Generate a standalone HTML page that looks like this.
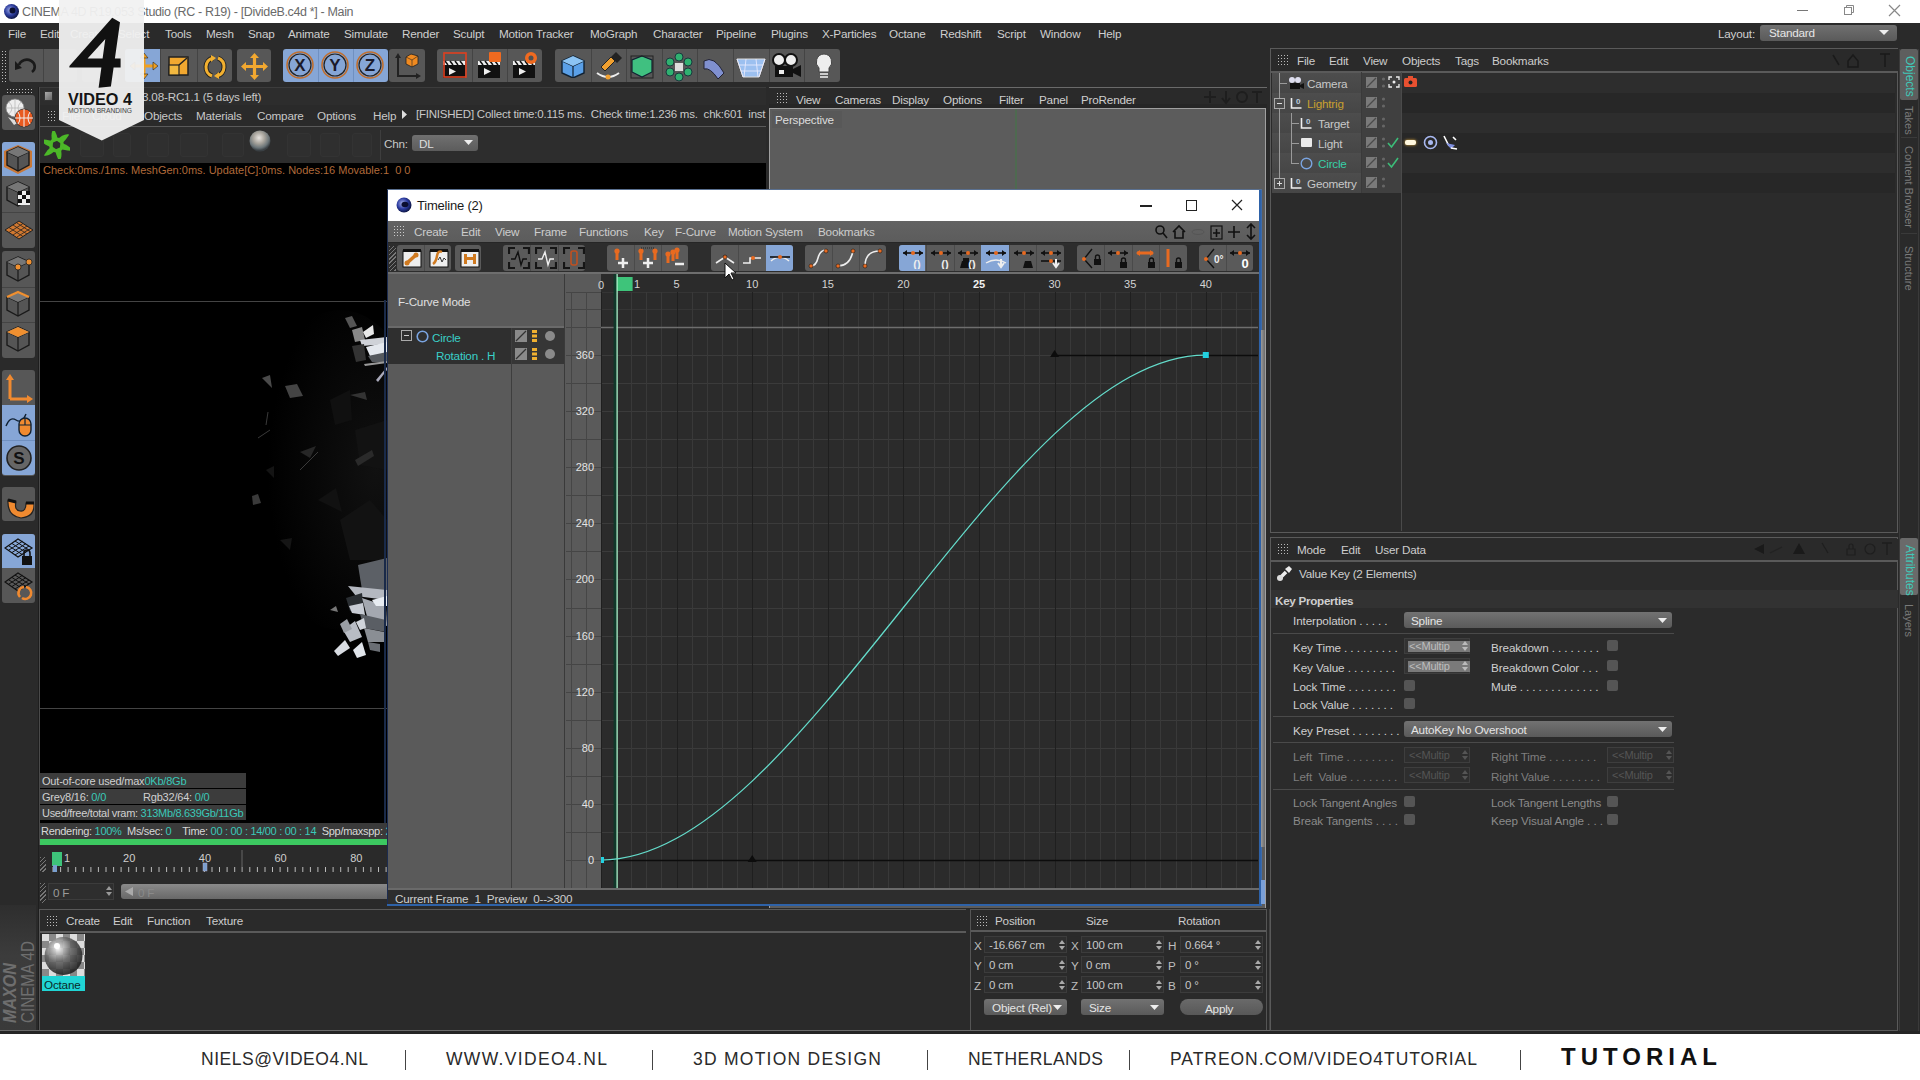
<!DOCTYPE html>
<html><head><meta charset="utf-8">
<style>
*{box-sizing:border-box;margin:0;padding:0}
html,body{width:1920px;height:1080px;overflow:hidden;background:#2a2a2a;font-family:"Liberation Sans",sans-serif;font-size:12px;color:#c4c4c4}
.a{position:absolute}
.t{position:absolute;white-space:nowrap;line-height:1}
.grip{position:absolute;background-image:radial-gradient(circle,#bbb 0.6px,transparent 0.9px);background-size:3px 3px}
.btn{position:absolute;background:#505050;border-radius:3px}
.blu{background:#86a6d6}
</style></head><body>
<div class="a" style="left:0px;top:0px;width:1920px;height:23px;background:#fff;"></div>
<svg class="a" style="left:3px;top:3px;" width="17" height="17" viewBox="0 0 17 17"><defs><radialGradient id="c4i" cx="40%" cy="40%" r="60%"><stop offset="0" stop-color="#9aa8e8"/><stop offset="0.6" stop-color="#2c3c9c"/><stop offset="1" stop-color="#101848"/></radialGradient></defs><circle cx="8.5" cy="8.5" r="7.5" fill="url(#c4i)"/><circle cx="9.5" cy="7.5" r="3" fill="#0c1030"/></svg>
<div class="t" style="left:22px;top:5.5px;font-size:12.5px;color:#6a6a6a;letter-spacing:-0.35px">CINEMA 4D R19.053 Studio (RC - R19) - [DivideB.c4d *] - Main</div>
<div class="a" style="left:1797px;top:10px;width:11px;height:1px;background:#777;"></div>
<svg class="a" style="left:1843px;top:4px;" width="12" height="12" viewBox="0 0 12 12"><rect x="1.5" y="3.5" width="7" height="7" fill="none" stroke="#888"/><path d="M3.5 3.5V1.5h7v7h-2" fill="none" stroke="#888"/></svg>
<svg class="a" style="left:1888px;top:4px;" width="13" height="13" viewBox="0 0 13 13"><path d="M1 1L12 12M12 1L1 12" stroke="#888" stroke-width="1.2"/></svg>
<div class="t" style="left:8px;top:27.6px;font-size:11.7px;color:#cfcfcf;letter-spacing:-0.2px;">File</div>
<div class="t" style="left:40px;top:27.6px;font-size:11.7px;color:#cfcfcf;letter-spacing:-0.2px;">Edit</div>
<div class="t" style="left:70px;top:27.6px;font-size:11.7px;color:#cfcfcf;letter-spacing:-0.2px;">Create</div>
<div class="t" style="left:118px;top:27.6px;font-size:11.7px;color:#cfcfcf;letter-spacing:-0.2px;">Select</div>
<div class="t" style="left:165px;top:27.6px;font-size:11.7px;color:#cfcfcf;letter-spacing:-0.2px;">Tools</div>
<div class="t" style="left:206px;top:27.6px;font-size:11.7px;color:#cfcfcf;letter-spacing:-0.2px;">Mesh</div>
<div class="t" style="left:248px;top:27.6px;font-size:11.7px;color:#cfcfcf;letter-spacing:-0.2px;">Snap</div>
<div class="t" style="left:288px;top:27.6px;font-size:11.7px;color:#cfcfcf;letter-spacing:-0.2px;">Animate</div>
<div class="t" style="left:344px;top:27.6px;font-size:11.7px;color:#cfcfcf;letter-spacing:-0.2px;">Simulate</div>
<div class="t" style="left:402px;top:27.6px;font-size:11.7px;color:#cfcfcf;letter-spacing:-0.2px;">Render</div>
<div class="t" style="left:453px;top:27.6px;font-size:11.7px;color:#cfcfcf;letter-spacing:-0.2px;">Sculpt</div>
<div class="t" style="left:499px;top:27.6px;font-size:11.7px;color:#cfcfcf;letter-spacing:-0.2px;">Motion Tracker</div>
<div class="t" style="left:590px;top:27.6px;font-size:11.7px;color:#cfcfcf;letter-spacing:-0.2px;">MoGraph</div>
<div class="t" style="left:653px;top:27.6px;font-size:11.7px;color:#cfcfcf;letter-spacing:-0.2px;">Character</div>
<div class="t" style="left:716px;top:27.6px;font-size:11.7px;color:#cfcfcf;letter-spacing:-0.2px;">Pipeline</div>
<div class="t" style="left:771px;top:27.6px;font-size:11.7px;color:#cfcfcf;letter-spacing:-0.2px;">Plugins</div>
<div class="t" style="left:822px;top:27.6px;font-size:11.7px;color:#cfcfcf;letter-spacing:-0.2px;">X-Particles</div>
<div class="t" style="left:889px;top:27.6px;font-size:11.7px;color:#cfcfcf;letter-spacing:-0.2px;">Octane</div>
<div class="t" style="left:940px;top:27.6px;font-size:11.7px;color:#cfcfcf;letter-spacing:-0.2px;">Redshift</div>
<div class="t" style="left:997px;top:27.6px;font-size:11.7px;color:#cfcfcf;letter-spacing:-0.2px;">Script</div>
<div class="t" style="left:1040px;top:27.6px;font-size:11.7px;color:#cfcfcf;letter-spacing:-0.2px;">Window</div>
<div class="t" style="left:1098px;top:27.6px;font-size:11.7px;color:#cfcfcf;letter-spacing:-0.2px;">Help</div>
<div class="t" style="left:1718px;top:27.6px;font-size:11.7px;color:#d0d0d0;letter-spacing:-0.2px;">Layout:</div>
<div class="a" style="left:1760px;top:25px;width:137px;height:16px;background:linear-gradient(#707070,#5a5a5a);border-radius:3px"></div>
<div class="t" style="left:1769px;top:26.6px;font-size:11.7px;color:#e6e6e6;letter-spacing:-0.2px;">Standard</div>
<svg class="a" style="left:1879px;top:30px;" width="10" height="6" viewBox="0 0 10 6"><path d="M0 0h10L5 5z" fill="#eee"/></svg>
<div class="grip" style="left:1px;top:50px;width:7px;height:32px"></div>
<div class="a" style="left:9px;top:49px;width:68px;height:33px;background:#575757;border-radius:3px"></div>
<div class="a" style="left:43px;top:49px;width:1px;height:33px;background:#444;"></div>
<div class="a" style="left:82px;top:49px;width:36px;height:33px;background:#575757;border-radius:3px"></div>
<div class="a" style="left:125px;top:49px;width:107px;height:33px;background:#575757;border-radius:3px"></div>
<div class="a" style="left:125px;top:49px;width:35px;height:33px;background:#86a6d6;border-radius:3px 0 0 3px"></div>
<div class="a" style="left:197px;top:49px;width:1px;height:33px;background:#444;"></div>
<div class="a" style="left:160px;top:49px;width:1px;height:33px;background:#444;"></div>
<div class="a" style="left:237px;top:49px;width:34px;height:33px;background:#575757;border-radius:3px"></div>
<div class="a" style="left:283px;top:49px;width:105px;height:33px;background:#86a6d6;border-radius:3px"></div>
<div class="a" style="left:318px;top:49px;width:1px;height:33px;background:#7090c0;"></div>
<div class="a" style="left:353px;top:49px;width:1px;height:33px;background:#7090c0;"></div>
<div class="a" style="left:389px;top:49px;width:36px;height:33px;background:#575757;border-radius:3px"></div>
<div class="a" style="left:437px;top:49px;width:105px;height:33px;background:#575757;border-radius:3px"></div>
<div class="a" style="left:472px;top:49px;width:1px;height:33px;background:#444;"></div>
<div class="a" style="left:507px;top:49px;width:1px;height:33px;background:#444;"></div>
<div class="a" style="left:555px;top:49px;width:285px;height:33px;background:#575757;border-radius:3px"></div>
<div class="a" style="left:591px;top:49px;width:1px;height:33px;background:#444;"></div>
<div class="a" style="left:626px;top:49px;width:1px;height:33px;background:#444;"></div>
<div class="a" style="left:662px;top:49px;width:1px;height:33px;background:#444;"></div>
<div class="a" style="left:697px;top:49px;width:1px;height:33px;background:#444;"></div>
<div class="a" style="left:733px;top:49px;width:1px;height:33px;background:#444;"></div>
<div class="a" style="left:769px;top:49px;width:1px;height:33px;background:#444;"></div>
<div class="a" style="left:804px;top:49px;width:1px;height:33px;background:#444;"></div>
<svg class="a" style="left:14px;top:55px;" width="24" height="22" viewBox="0 0 24 22"><path d="M5 10 A8 7 0 1 1 18 17" fill="none" stroke="#1a1a1a" stroke-width="2.6"/><path d="M1 6 L8 13 L1 15z" fill="#1a1a1a"/></svg>
<svg class="a" style="left:130px;top:53px;" width="28" height="26" viewBox="0 0 28 26"><path d="M14 2v22M3 13h22" stroke="#f0a020" stroke-width="3"/><path d="M14 0l-4 5h8zM14 26l-4-5h8zM0 13l5-4v8zM28 13l-5-4v8z" fill="#f0a020" stroke="#222" stroke-width=".6"/></svg>
<svg class="a" style="left:168px;top:56px;" width="21" height="20" viewBox="0 0 21 20"><rect x="1" y="1" width="19" height="18" fill="#f2a830" stroke="#222" stroke-width="1.5"/><rect x="1" y="9" width="10" height="10" fill="#f2b840" stroke="#222" stroke-width="1.2"/><path d="M11 9L19 2" stroke="#222" stroke-width="1.5"/></svg>
<svg class="a" style="left:203px;top:55px;" width="24" height="24" viewBox="0 0 24 24"><g fill="none" stroke-linecap="butt"><path d="M10 3A9.5 9.5 0 0 0 9 21" stroke="#222" stroke-width="5"/><path d="M14 21A9.5 9.5 0 0 0 15 3" stroke="#222" stroke-width="5"/><path d="M10 3A9.5 9.5 0 0 0 9 21" stroke="#f2b030" stroke-width="3"/><path d="M14 21A9.5 9.5 0 0 0 15 3" stroke="#f2b030" stroke-width="3"/></g><path d="M8 0l5 3-5 4z" fill="#f2b030"/><path d="M16 24l-5-3 5-4z" fill="#f2b030"/></svg>
<svg class="a" style="left:241px;top:53px;" width="27" height="27" viewBox="0 0 27 27"><path d="M13.5 3v21M3 13.5h21" stroke="#f2a830" stroke-width="3.2"/><path d="M13.5 0l-4.5 5h9zM13.5 27l-4.5-5h9zM0 13.5l5-4.5v9zM27 13.5l-5-4.5v9z" fill="#f2a830"/></svg>
<svg class="a" style="left:285px;top:50px;" width="30" height="30" viewBox="0 0 30 30"><circle cx="15" cy="15" r="13" fill="none" stroke="#c07030" stroke-width="1.6"/><circle cx="15" cy="15" r="11" fill="none" stroke="#222" stroke-width="1.2"/><text x="15" y="21" font-family="Liberation Sans" font-weight="bold" font-size="17" text-anchor="middle" fill="#1a1a2a">X</text></svg>
<svg class="a" style="left:320px;top:50px;" width="30" height="30" viewBox="0 0 30 30"><circle cx="15" cy="15" r="13" fill="none" stroke="#c07030" stroke-width="1.6"/><circle cx="15" cy="15" r="11" fill="none" stroke="#222" stroke-width="1.2"/><text x="15" y="21" font-family="Liberation Sans" font-weight="bold" font-size="17" text-anchor="middle" fill="#1a1a2a">Y</text></svg>
<svg class="a" style="left:355px;top:50px;" width="30" height="30" viewBox="0 0 30 30"><circle cx="15" cy="15" r="13" fill="none" stroke="#c07030" stroke-width="1.6"/><circle cx="15" cy="15" r="11" fill="none" stroke="#222" stroke-width="1.2"/><text x="15" y="21" font-family="Liberation Sans" font-weight="bold" font-size="17" text-anchor="middle" fill="#1a1a2a">Z</text></svg>
<svg class="a" style="left:394px;top:52px;" width="28" height="28" viewBox="0 0 28 28"><path d="M4 4v20h20" fill="none" stroke="#222" stroke-width="2"/><path d="M4 1l-3 5h6zM27 24l-5-3v6z" fill="#222"/><path d="M12 5l5-3 7 2v8l-6 3-6-3z" fill="#f08a20" stroke="#222" stroke-width=".8"/><path d="M12 5l6 3 6-4M18 8v7" stroke="#222" stroke-width=".6" fill="none"/></svg>
<svg class="a" style="left:440px;top:51px;" width="30" height="30" viewBox="0 0 30 30"><rect x="3" y="13" width="22" height="14" fill="#111"/><path d="M3 10h22v4H3z" fill="#eee"/><path d="M5 10l3 4M10 10l3 4M15 10l3 4M20 10l3 4" stroke="#111" stroke-width="1.5"/><path d="M9 17v7l7-3.5z" fill="#eee"/><rect x="4" y="2" width="22" height="24" fill="none" stroke="#e04020" stroke-width="1.6"/></svg>
<svg class="a" style="left:475px;top:51px;" width="30" height="30" viewBox="0 0 30 30"><rect x="3" y="13" width="22" height="14" fill="#111"/><path d="M3 10h22v4H3z" fill="#eee"/><path d="M5 10l3 4M10 10l3 4M15 10l3 4M20 10l3 4" stroke="#111" stroke-width="1.5"/><path d="M9 17v7l7-3.5z" fill="#eee"/><rect x="14" y="1" width="12" height="10" rx="1" fill="#f06a20"/></svg>
<svg class="a" style="left:510px;top:51px;" width="30" height="30" viewBox="0 0 30 30"><rect x="3" y="13" width="22" height="14" fill="#111"/><path d="M3 10h22v4H3z" fill="#eee"/><path d="M5 10l3 4M10 10l3 4M15 10l3 4M20 10l3 4" stroke="#111" stroke-width="1.5"/><path d="M9 17v7l7-3.5z" fill="#eee"/><circle cx="21" cy="7" r="6" fill="#f06a20"/><circle cx="21" cy="7" r="2.5" fill="#505050"/></svg>
<svg class="a" style="left:560px;top:54px;" width="26" height="24" viewBox="0 0 26 24"><path d="M13 2l11 5v12l-11 5-11-5V7z" fill="#5aa0e8" stroke="#123" stroke-width="1.4"/><path d="M2 7l11 5 11-5M13 12v12" stroke="#123" stroke-width="1.2" fill="none"/><path d="M2 7l11-5 11 5-11 5z" fill="#8cc4f4"/></svg>
<svg class="a" style="left:593px;top:51px;" width="30" height="30" viewBox="0 0 30 30"><path d="M4 22Q15 30 26 22" fill="none" stroke="#eee" stroke-width="2"/><circle cx="15" cy="26" r="2.5" fill="#f0a030"/><path d="M8 16l10-10 4 4-10 10z" fill="#f0a030" stroke="#222"/><path d="M18 6l5-5 6 6-5 5z" fill="#222"/></svg>
<svg class="a" style="left:628px;top:53px;" width="28" height="28" viewBox="0 0 28 28"><path d="M14 3l10 4v12l-10 5-10-5V7z" fill="#40c080" stroke="#123" stroke-width="1.2"/><rect x="3" y="3" width="22" height="22" fill="none" stroke="#222" stroke-width="1"/></svg>
<svg class="a" style="left:664px;top:52px;" width="30" height="30" viewBox="0 0 30 30"><g fill="#30b070" stroke="#123" stroke-width=".8"><circle cx="15" cy="5" r="4"/><circle cx="24" cy="10" r="4"/><circle cx="24" cy="20" r="4"/><circle cx="15" cy="25" r="4"/><circle cx="6" cy="20" r="4"/><circle cx="6" cy="10" r="4"/></g><rect x="11" y="11" width="8" height="8" fill="#ddd"/></svg>
<svg class="a" style="left:700px;top:53px;" width="28" height="28" viewBox="0 0 28 28"><path d="M4 8Q14 2 24 20L18 26Q10 14 4 16z" fill="#8090d0" stroke="#223" stroke-width="1"/></svg>
<svg class="a" style="left:735px;top:53px;" width="32" height="28" viewBox="0 0 32 28"><path d="M2 6h28L24 24H8z" fill="#9cc0f0" stroke="#ddd" stroke-width="1"/><path d="M2 6l6 18M30 6l-6 18M11 6l-2 18M21 6l2 18M4 12h24M6 18h20" stroke="#eef" stroke-width=".8"/></svg>
<svg class="a" style="left:771px;top:52px;" width="32" height="30" viewBox="0 0 32 30"><circle cx="8" cy="8" r="6" fill="#eee" stroke="#111" stroke-width="2"/><circle cx="20" cy="8" r="6" fill="#eee" stroke="#111" stroke-width="2"/><rect x="4" y="14" width="18" height="11" fill="#111"/><path d="M22 17l8-4v12l-8-4z" fill="#111"/><rect x="8" y="18" width="5" height="4" fill="#eee"/></svg>
<svg class="a" style="left:812px;top:52px;" width="24" height="30" viewBox="0 0 24 30"><path d="M12 2a8 8 0 0 1 5 14v4h-10v-4a8 8 0 0 1 5-14z" fill="#eee" stroke="#444" stroke-width="1"/><path d="M8 22h8M8 25h8" stroke="#ccc" stroke-width="2"/></svg>
<div class="a" style="left:0px;top:87px;width:39px;height:947px;background:#2a2a2a;"></div>
<div class="a" style="left:38px;top:87px;width:1px;height:947px;background:#1e1e1e;"></div>
<div class="grip" style="left:6px;top:88px;width:26px;height:5px"></div>
<div class="a" style="left:2px;top:95px;width:33px;height:35px;background:#575757;border-radius:3px"></div>
<div class="a" style="left:2px;top:142px;width:33px;height:106px;background:#575757;border-radius:3px"></div>
<div class="a" style="left:2px;top:142px;width:33px;height:34px;background:#86a6d6;border-radius:3px 3px 0 0"></div>
<div class="a" style="left:2px;top:212px;width:33px;height:1px;background:#444;"></div>
<div class="a" style="left:2px;top:251px;width:33px;height:107px;background:#575757;border-radius:3px"></div>
<div class="a" style="left:2px;top:287px;width:33px;height:1px;background:#444;"></div>
<div class="a" style="left:2px;top:322px;width:33px;height:1px;background:#444;"></div>
<div class="a" style="left:2px;top:370px;width:33px;height:106px;background:#575757;border-radius:3px"></div>
<div class="a" style="left:2px;top:405px;width:33px;height:70px;background:#86a6d6;border-radius:0 0 3px 3px"></div>
<div class="a" style="left:2px;top:440px;width:33px;height:1px;background:#7090c0;"></div>
<div class="a" style="left:2px;top:487px;width:33px;height:34px;background:#575757;border-radius:3px"></div>
<div class="a" style="left:2px;top:534px;width:33px;height:69px;background:#575757;border-radius:3px"></div>
<div class="a" style="left:2px;top:534px;width:33px;height:34px;background:#86a6d6;border-radius:3px 3px 0 0"></div>
<svg class="a" style="left:4px;top:97px;" width="30" height="32" viewBox="0 0 30 32"><circle cx="11" cy="11" r="9" fill="#eee" stroke="#888" stroke-width=".8"/><path d="M2 11h18M11 2v18M5 5q6 6 0 12M17 5q-6 6 0 12" stroke="#aaa" stroke-width=".6" fill="none"/><path d="M4 20l6 8 5-3" fill="#ddd"/><circle cx="20" cy="21" r="9" fill="#e85a20" stroke="#333" stroke-width=".8"/><path d="M11 21h18M20 12v18M14 15q4 6 0 12M26 15q-4 6 0 12" stroke="#eee" stroke-width="1" fill="none"/></svg>
<svg class="a" style="left:3px;top:144px;" width="31" height="30" viewBox="0 0 31 30"><path d="M15 1l14 6v16l-14 7-14-7V7z" fill="#c87838"/><path d="M15 3l11 5v13l-11 6-11-6V8z" fill="#555" stroke="#1a1a1a" stroke-width="1.4"/><path d="M4 8l11 5 11-5M15 13v14" stroke="#1a1a1a" stroke-width="1.2" fill="none"/><path d="M4 8l11-5 11 5-11 5z" fill="#777"/></svg>
<svg class="a" style="left:3px;top:179px;" width="31" height="30" viewBox="0 0 31 30"><path d="M15 3l11 5v13l-11 6-11-6V8z" fill="#555" stroke="#1a1a1a" stroke-width="1.4"/><path d="M4 8l11 5 11-5M15 13v14" stroke="#1a1a1a" stroke-width="1.2" fill="none"/><path d="M4 8l11-5 11 5-11 5z" fill="#777"/><rect x="15" y="12" width="12" height="14" fill="#eee"/><path d="M15 12h4v4h-4zM23 12h4v4h-4zM19 16h4v4h-4zM15 20h4v4h-4zM23 20h4v4h-4z" fill="#111"/></svg>
<svg class="a" style="left:3px;top:216px;" width="31" height="28" viewBox="0 0 31 28"><path d="M2 14L16 5l14 9-14 9z" fill="#d07830" stroke="#222" stroke-width="1"/><path d="M6 11.5l14 9M10 9l14 9M14 7l14 9M6 16.5l14-9M10 19l14-9M14 21l14-9" stroke="#222" stroke-width=".8"/></svg>
<svg class="a" style="left:3px;top:254px;" width="31" height="30" viewBox="0 0 31 30"><path d="M15 3l11 5v13l-11 6-11-6V8z" fill="#555" stroke="#1a1a1a" stroke-width="1.4"/><path d="M4 8l11 5 11-5M15 13v14" stroke="#1a1a1a" stroke-width="1.2" fill="none"/><path d="M4 8l11-5 11 5-11 5z" fill="#777"/><circle cx="15" cy="13" r="3" fill="#f09030" stroke="#222" stroke-width=".8"/><circle cx="26" cy="8" r="3" fill="#f09030" stroke="#222" stroke-width=".8"/></svg>
<svg class="a" style="left:3px;top:289px;" width="31" height="30" viewBox="0 0 31 30"><path d="M15 3l11 5v13l-11 6-11-6V8z" fill="#555" stroke="#1a1a1a" stroke-width="1.4"/><path d="M4 8l11 5 11-5M15 13v14" stroke="#1a1a1a" stroke-width="1.2" fill="none"/><path d="M4 8l11-5 11 5-11 5z" fill="#777"/><path d="M4 8l11-5 11 5" stroke="#f09030" stroke-width="2.4" fill="none"/></svg>
<svg class="a" style="left:3px;top:324px;" width="31" height="30" viewBox="0 0 31 30"><path d="M15 3l11 5v13l-11 6-11-6V8z" fill="#555" stroke="#1a1a1a" stroke-width="1.4"/><path d="M4 8l11 5 11-5M15 13v14" stroke="#1a1a1a" stroke-width="1.2" fill="none"/><path d="M4 8l11-5 11 5-11 5z" fill="#777"/><path d="M4 8l11-5 11 5-11 5z" fill="#f09030"/></svg>
<svg class="a" style="left:4px;top:373px;" width="30" height="30" viewBox="0 0 30 30"><path d="M6 26V5M6 26h20" fill="none" stroke="#f08a30" stroke-width="3"/><path d="M6 1l-4 6h8zM29 26l-6-4v8z" fill="#f08a30"/></svg>
<svg class="a" style="left:4px;top:408px;" width="30" height="30" viewBox="0 0 30 30"><path d="M2 18q4-10 10-6t10-6" fill="none" stroke="#123" stroke-width="1.4"/><rect x="15" y="10" width="12" height="18" rx="6" fill="#f08a30" stroke="#123" stroke-width="1.4"/><path d="M15 17h12M21 10v7" stroke="#123" stroke-width="1.2"/></svg>
<svg class="a" style="left:4px;top:443px;" width="30" height="30" viewBox="0 0 30 30"><circle cx="15" cy="15" r="12" fill="#666" stroke="#222" stroke-width="1.6"/><text x="15" y="21" font-family="Liberation Sans" font-weight="bold" font-size="17" text-anchor="middle" fill="#111">S</text></svg>
<svg class="a" style="left:4px;top:490px;" width="30" height="30" viewBox="0 0 30 30"><path d="M4 10l8 2q-2 8 4 9 6 1 6-8l8 0q1 14-13 15Q3 26 4 10z" fill="#f08a30" stroke="#222" stroke-width="1.2"/><path d="M4 10l8 2M22 13h8" stroke="#111" stroke-width="3"/></svg>
<svg class="a" style="left:4px;top:536px;" width="30" height="32" viewBox="0 0 30 32"><path d="M1 12L14 3l14 9-14 9z" fill="none" stroke="#111" stroke-width="1.2"/><path d="M4.5 9.7l14 9M8 7.5l14 9M11 5l14 9M4.5 14.3l14-9M8 16.5l14-9M11 19l14-9" stroke="#111" stroke-width="1"/><rect x="18" y="20" width="10" height="9" fill="#111"/><path d="M20 20v-3a3 3 0 0 1 6 0v3" fill="none" stroke="#111" stroke-width="1.6"/></svg>
<svg class="a" style="left:4px;top:570px;" width="30" height="32" viewBox="0 0 30 32"><path d="M1 12L14 3l14 9-14 9z" fill="none" stroke="#111" stroke-width="1.2"/><path d="M4.5 9.7l14 9M8 7.5l14 9M11 5l14 9M4.5 14.3l14-9M8 16.5l14-9M11 19l14-9" stroke="#111" stroke-width="1"/><path d="M22 17a6 6 0 1 1-4 11M16 27a6 6 0 0 1 4-10" fill="none" stroke="#f08a30" stroke-width="2.6"/></svg>
<div class="a" style="left:0px;top:905px;width:36px;height:127px;background:linear-gradient(#2e2e2e,#3c3c3c 40%,#3a3a3a);"></div>
<svg class="a" style="left:0px;top:935px;" width="38" height="95" viewBox="0 0 38 95"><g transform="rotate(-90)"><text x="-88" y="15.5" font-family="Liberation Sans" font-weight="bold" font-style="italic" font-size="19" fill="#6e6e6e" textLength="60" lengthAdjust="spacingAndGlyphs">MAXON</text><text x="-88" y="33.5" font-family="Liberation Sans" font-size="18" fill="#6e6e6e" textLength="82" lengthAdjust="spacingAndGlyphs">CINEMA 4D</text></g></svg>
<div class="a" style="left:39px;top:87px;width:727px;height:76px;background:#2d2d2d;"></div>
<div class="a" style="left:39px;top:87px;width:727px;height:1px;background:#3c3c3c;"></div>
<div class="a" style="left:39px;top:87px;width:1px;height:760px;background:#4a4a4a;"></div>
<div class="a" style="left:44px;top:91px;width:9px;height:10px;background:linear-gradient(135deg,#aaa,#666);border:1px solid #333"></div>
<div class="t" style="left:142px;top:90.6px;font-size:11.7px;color:#c8c8c8;letter-spacing:-0.2px;">3.08-RC1.1 (5 days left)</div>
<div class="a" style="left:40px;top:105px;width:726px;height:21px;background:#2a2a2a;"></div>
<div class="grip" style="left:47px;top:110px;width:10px;height:12px"></div>
<div class="t" style="left:62px;top:109.6px;font-size:11.7px;color:#c8c8c8;letter-spacing:-0.2px;">File</div>
<div class="t" style="left:92px;top:109.6px;font-size:11.7px;color:#c8c8c8;letter-spacing:-0.2px;">Cloud</div>
<div class="t" style="left:144px;top:109.6px;font-size:11.7px;color:#c8c8c8;letter-spacing:-0.2px;">Objects</div>
<div class="t" style="left:196px;top:109.6px;font-size:11.7px;color:#c8c8c8;letter-spacing:-0.2px;">Materials</div>
<div class="t" style="left:257px;top:109.6px;font-size:11.7px;color:#c8c8c8;letter-spacing:-0.2px;">Compare</div>
<div class="t" style="left:317px;top:109.6px;font-size:11.7px;color:#c8c8c8;letter-spacing:-0.2px;">Options</div>
<div class="t" style="left:373px;top:109.6px;font-size:11.7px;color:#c8c8c8;letter-spacing:-0.2px;">Help</div>
<svg class="a" style="left:402px;top:110px;" width="5" height="9" viewBox="0 0 5 9"><path d="M0 0l5 4.5L0 9z" fill="#ddd"/></svg>
<div class="t" style="left:416px;top:108.6px;font-size:11.5px;color:#c8c8c8;letter-spacing:-0.22px">[FINISHED] Collect time:0.115 ms.&nbsp; Check time:1.236 ms.&nbsp; chk:601&nbsp; inst</div>
<div class="a" style="left:40px;top:126px;width:726px;height:1px;background:#5a5a5a;"></div>
<svg class="a" style="left:44px;top:131px;" width="26" height="28" viewBox="0 0 26 28"><g transform="translate(12.5,14) scale(1.15)"><path d="M0 -4 C4 -8 8 -10 11 -9 C9 -6 7 -3 4 -1 Z" fill="#4cb828" transform="rotate(0)"/><path d="M0 -4 C4 -8 8 -10 11 -9 C9 -6 7 -3 4 -1 Z" fill="#4cb828" transform="rotate(60)"/><path d="M0 -4 C4 -8 8 -10 11 -9 C9 -6 7 -3 4 -1 Z" fill="#4cb828" transform="rotate(120)"/><path d="M0 -4 C4 -8 8 -10 11 -9 C9 -6 7 -3 4 -1 Z" fill="#4cb828" transform="rotate(180)"/><path d="M0 -4 C4 -8 8 -10 11 -9 C9 -6 7 -3 4 -1 Z" fill="#4cb828" transform="rotate(240)"/><path d="M0 -4 C4 -8 8 -10 11 -9 C9 -6 7 -3 4 -1 Z" fill="#4cb828" transform="rotate(300)"/><circle r="5.2" fill="none" stroke="#4cb828" stroke-width="2.6"/></g></svg>
<div class="a" style="left:80px;top:133px;width:24px;height:24px;background:#2f2f2f;border-radius:3px;border:1px solid #333"></div>
<div class="a" style="left:113px;top:133px;width:18px;height:24px;background:#2f2f2f;border-radius:3px;border:1px solid #333"></div>
<div class="a" style="left:147px;top:133px;width:22px;height:24px;background:#2f2f2f;border-radius:3px;border:1px solid #333"></div>
<div class="a" style="left:180px;top:133px;width:28px;height:24px;background:#2f2f2f;border-radius:3px;border:1px solid #333"></div>
<div class="a" style="left:222px;top:133px;width:22px;height:24px;background:#2f2f2f;border-radius:3px;border:1px solid #333"></div>
<div class="a" style="left:287px;top:133px;width:24px;height:24px;background:#2f2f2f;border-radius:3px;border:1px solid #333"></div>
<div class="a" style="left:320px;top:133px;width:20px;height:24px;background:#2f2f2f;border-radius:3px;border:1px solid #333"></div>
<div class="a" style="left:352px;top:133px;width:20px;height:24px;background:#2f2f2f;border-radius:3px;border:1px solid #333"></div>
<svg class="a" style="left:249px;top:130px;" width="24" height="24" viewBox="0 0 24 24"><defs><radialGradient id="sph" cx="45%" cy="35%" r="60%"><stop offset="0" stop-color="#e8e4e0"/><stop offset=".45" stop-color="#a8a49c"/><stop offset=".8" stop-color="#6a7478"/><stop offset="1" stop-color="#3a4044"/></radialGradient></defs><circle cx="11" cy="11" r="10.5" fill="url(#sph)"/></svg>
<div class="a" style="left:380px;top:130px;width:1px;height:30px;background:#3e3e3e;"></div>
<div class="t" style="left:384px;top:137.6px;font-size:11.7px;color:#c8c8c8;letter-spacing:-0.2px;">Chn:</div>
<div class="a" style="left:412px;top:135px;width:66px;height:16px;background:linear-gradient(#707070,#5c5c5c);border-radius:3px"></div>
<div class="t" style="left:419px;top:137.6px;font-size:11.7px;color:#dedede;letter-spacing:-0.2px;">DL</div>
<svg class="a" style="left:464px;top:140px;" width="9" height="5" viewBox="0 0 9 5"><path d="M0 0h9L4.5 5z" fill="#eee"/></svg>
<div class="a" style="left:40px;top:163px;width:726px;height:684px;background:#000;"></div>
<div class="t" style="left:43px;top:164.7px;font-size:11px;color:#b06a3a;letter-spacing:0px">Check:0ms./1ms. MeshGen:0ms. Update[C]:0ms. Nodes:16 Movable:1&nbsp; 0 0</div>
<div class="a" style="left:40px;top:301px;width:347px;height:1px;background:#444;"></div>
<div class="a" style="left:40px;top:708px;width:347px;height:1px;background:#444;"></div>
<svg class="a" style="left:40px;top:163px;" width="348" height="684" viewBox="0 0 348 684"><g transform="translate(-40,-163)"><defs><radialGradient id="dimg" cx="70%" cy="50%" r="60%"><stop offset="0" stop-color="#111"/><stop offset="1" stop-color="#000"/></radialGradient></defs><ellipse cx="340" cy="470" rx="90" ry="160" fill="url(#dimg)"/><polygon points="262,378 270,375 272,388" fill="#4a4a4a" opacity="1"/><polygon points="285,386 297,384 303,396 290,398" fill="#444" opacity="1"/><polygon points="300,452 316,446 310,458" fill="#262626" opacity="1"/><polygon points="330,400 350,390 352,420 335,425" fill="#101010" opacity="1"/><polygon points="252,496 258,494 261,503 253,505" fill="#3a3a3a" opacity="1"/><polygon points="318,500 336,488 342,512" fill="#111" opacity="1"/><polygon points="355,430 387,420 387,470 360,465" fill="#121212" opacity="1"/><polygon points="280,540 292,538 290,550" fill="#151515" opacity="1"/><polygon points="340,520 370,500 387,520 387,560 350,560" fill="#121212" opacity="1"/><polygon points="266,470 274,466 274,478" fill="#141414" opacity="1"/><polygon points="350,395 365,392 367,400" fill="#333" opacity="1"/><polygon points="355,460 372,450 374,456 358,466" fill="#2a2a2a" opacity="1"/><polygon points="345,318 352,316 357,326 350,328" fill="#555" opacity="1"/><polygon points="352,330 362,327 365,340 355,342" fill="#888" opacity="1"/><polygon points="363,332 373,325 374,334 366,338" fill="#e8e8e8" opacity="1"/><polygon points="360,340 387,337 387,344 362,346" fill="#cfd2d8" opacity="1"/><polygon points="366,347 387,342 387,355 370,356" fill="#e4e8ee" opacity="1"/><polygon points="368,356 387,352 387,362 372,362" fill="#55595e" opacity="1"/><polygon points="364,364 387,361 387,363 365,366" fill="#999" opacity="1"/><polygon points="376,380 387,367 387,370 378,382" fill="#aab" opacity="1"/><polygon points="352,346 364,344 366,360 356,362" fill="#333" opacity="1"/><polygon points="358,565 387,558 387,592 362,590" fill="#5c6066" opacity="1"/><polygon points="348,586 387,590 387,600 356,596" fill="#b4b8c0" opacity="1"/><polygon points="346,598 362,593 364,614 350,611" fill="#2a2e32" opacity="1"/><polygon points="349,606 363,603 365,615 352,613" fill="#c8ccd4" opacity="1"/><polygon points="362,598 386,606 387,626 368,620" fill="#a4a8b0" opacity="1"/><polygon points="360,614 386,620 386,632 364,628" fill="#5a5e64" opacity="1"/><polygon points="364,628 384,632 384,642 368,642" fill="#8a8e94" opacity="1"/><polygon points="368,642 380,644 380,652 370,650" fill="#6a6e74" opacity="1"/><polygon points="334,651 345,640 350,648 338,656" fill="#d8dce2" opacity="1"/><polygon points="343,630 355,621 362,637 350,642" fill="#b8bcc4" opacity="1"/><polygon points="353,650 362,642 366,655 357,658" fill="#e0e4ea" opacity="1"/><polygon points="340,624 347,619 352,629 344,633" fill="#9a9ea4" opacity="1"/><polygon points="356,622 364,618 366,628 360,630" fill="#d0d4da" opacity="1"/><polygon points="330,610 336,606 338,612" fill="#777" opacity="1"/><polygon points="372,600 387,596 387,606 376,606" fill="#e8ecf2" opacity="1"/><path d="M268 412L266 425M258 438L270 430M300 470L318 452" stroke="#3a3a3a" stroke-width="1"/><path d="M385 300V846" stroke="#1a2a48" stroke-width="2"/></g></svg>
<div class="a" style="left:40px;top:773px;width:206px;height:15px;background:#3c3c3c;"></div>
<div class="t" style="left:42px;top:775.7px;font-size:11px;color:#d0d0d0;letter-spacing:-0.2px">Out-of-core used/max<span style="color:#3ac8b8">0Kb/8Gb</span></div>
<div class="a" style="left:40px;top:789px;width:206px;height:15px;background:#3c3c3c;"></div>
<div class="t" style="left:42px;top:791.7px;font-size:11px;color:#d0d0d0;letter-spacing:-0.2px">Grey8/16: <span style="color:#3ac8b8">0/0</span></div>
<div class="t" style="left:143px;top:791.7px;font-size:11px;color:#d0d0d0;letter-spacing:-0.2px">Rgb32/64: <span style="color:#3ac8b8">0/0</span></div>
<div class="a" style="left:40px;top:805px;width:206px;height:15px;background:#3c3c3c;"></div>
<div class="t" style="left:42px;top:807.7px;font-size:11px;color:#d0d0d0;letter-spacing:-0.3px">Used/free/total vram: <span style="color:#3ac8b8">313Mb/8.639Gb/11Gb</span></div>
<div class="a" style="left:40px;top:823px;width:347px;height:16px;background:#3a3a3a;"></div>
<div class="t" style="left:41px;top:825.7px;font-size:11px;color:#d8d8d8;letter-spacing:-0.3px;width:346px;overflow:hidden">Rendering: <span style="color:#3ac8b8">100%</span>&nbsp; Ms/sec: <span style="color:#3ac8b8">0</span>&nbsp;&nbsp;&nbsp; Time: <span style="color:#3ac8b8">00 : 00 : 14/00 : 00 : 14</span>&nbsp; Spp/maxspp: <span style="color:#3ac8b8">2048</span></div>
<div class="a" style="left:40px;top:839px;width:347px;height:6px;background:#3cc860;"></div>
<div class="a" style="left:39px;top:845px;width:348px;height:64px;background:#2a2a2a;"></div>
<div class="grip" style="left:40px;top:857px;width:6px;height:15px;background-image:repeating-linear-gradient(135deg,#777 0 1px,transparent 1px 3px);background-size:auto"></div>
<div class="grip" style="left:40px;top:883px;width:6px;height:20px;background-image:repeating-linear-gradient(135deg,#777 0 1px,transparent 1px 3px);background-size:auto"></div>
<svg class="a" style="left:40px;top:845px;" width="347" height="30" viewBox="0 0 347 30"><path d="M13.0 22V27" stroke="#bbb" stroke-width="1"/><path d="M20.6 22V27" stroke="#bbb" stroke-width="1"/><path d="M28.1 22V27" stroke="#bbb" stroke-width="1"/><path d="M35.7 22V27" stroke="#bbb" stroke-width="1"/><path d="M43.3 22V27" stroke="#bbb" stroke-width="1"/><path d="M50.9 22V27" stroke="#bbb" stroke-width="1"/><path d="M58.4 22V27" stroke="#bbb" stroke-width="1"/><path d="M66.0 22V27" stroke="#bbb" stroke-width="1"/><path d="M73.6 22V27" stroke="#bbb" stroke-width="1"/><path d="M81.1 22V27" stroke="#bbb" stroke-width="1"/><path d="M88.7 22V27" stroke="#bbb" stroke-width="1"/><path d="M96.3 22V27" stroke="#bbb" stroke-width="1"/><path d="M103.8 22V27" stroke="#bbb" stroke-width="1"/><path d="M111.4 22V27" stroke="#bbb" stroke-width="1"/><path d="M119.0 22V27" stroke="#bbb" stroke-width="1"/><path d="M126.6 22V27" stroke="#bbb" stroke-width="1"/><path d="M134.1 22V27" stroke="#bbb" stroke-width="1"/><path d="M141.7 22V27" stroke="#bbb" stroke-width="1"/><path d="M149.3 22V27" stroke="#bbb" stroke-width="1"/><path d="M156.8 22V27" stroke="#bbb" stroke-width="1"/><path d="M164.4 22V27" stroke="#bbb" stroke-width="1"/><path d="M172.0 22V27" stroke="#bbb" stroke-width="1"/><path d="M179.5 22V27" stroke="#bbb" stroke-width="1"/><path d="M187.1 22V27" stroke="#bbb" stroke-width="1"/><path d="M194.7 22V27" stroke="#bbb" stroke-width="1"/><path d="M202.2 22V27" stroke="#bbb" stroke-width="1"/><path d="M209.8 22V27" stroke="#bbb" stroke-width="1"/><path d="M217.4 22V27" stroke="#bbb" stroke-width="1"/><path d="M225.0 22V27" stroke="#bbb" stroke-width="1"/><path d="M232.5 22V27" stroke="#bbb" stroke-width="1"/><path d="M240.1 22V27" stroke="#bbb" stroke-width="1"/><path d="M247.7 22V27" stroke="#bbb" stroke-width="1"/><path d="M255.2 22V27" stroke="#bbb" stroke-width="1"/><path d="M262.8 22V27" stroke="#bbb" stroke-width="1"/><path d="M270.4 22V27" stroke="#bbb" stroke-width="1"/><path d="M277.9 22V27" stroke="#bbb" stroke-width="1"/><path d="M285.5 22V27" stroke="#bbb" stroke-width="1"/><path d="M293.1 22V27" stroke="#bbb" stroke-width="1"/><path d="M300.7 22V27" stroke="#bbb" stroke-width="1"/><path d="M308.2 22V27" stroke="#bbb" stroke-width="1"/><path d="M315.8 22V27" stroke="#bbb" stroke-width="1"/><path d="M323.4 22V27" stroke="#bbb" stroke-width="1"/><path d="M330.9 22V27" stroke="#bbb" stroke-width="1"/><path d="M338.5 22V27" stroke="#bbb" stroke-width="1"/><path d="M346.1 22V27" stroke="#bbb" stroke-width="1"/><path d="M202 5V27" stroke="#666" stroke-width="1"/><text x="89.2" y="17" font-family="Liberation Sans" font-size="11" fill="#cfcfcf" text-anchor="middle">20</text><text x="164.9" y="17" font-family="Liberation Sans" font-size="11" fill="#cfcfcf" text-anchor="middle">40</text><text x="240.6" y="17" font-family="Liberation Sans" font-size="11" fill="#cfcfcf" text-anchor="middle">60</text><text x="316.3" y="17" font-family="Liberation Sans" font-size="11" fill="#cfcfcf" text-anchor="middle">80</text><text x="24" y="17" font-family="Liberation Sans" font-size="11" fill="#cfcfcf">1</text><rect x="12" y="7" width="10" height="14" fill="#3ec47a"/><rect x="13" y="20" width="4" height="7" fill="#7aa0d0"/><rect x="163" y="18" width="4" height="8" fill="#7aa0d0" stroke="#aac" stroke-width=".5"/></svg>
<div class="a" style="left:48px;top:883px;width:66px;height:17px;background:#2e2e2e;border:1px solid #3c3c3c"></div>
<div class="t" style="left:53px;top:886.6px;font-size:11.7px;color:#9a9a9a;letter-spacing:-0.2px;">0 F</div>
<svg class="a" style="left:106px;top:886px;" width="6" height="10" viewBox="0 0 6 10"><path d="M0 4l3-4 3 4zM0 6l3 4 3-4z" fill="#999"/></svg>
<div class="a" style="left:121px;top:884px;width:266px;height:15px;background:linear-gradient(#8a8a8a,#686868);border-radius:3px 0 0 3px"></div>
<svg class="a" style="left:125px;top:887px;" width="8" height="9" viewBox="0 0 8 9"><path d="M0 4.5L8 0v9z" fill="#aaa"/></svg>
<div class="t" style="left:138px;top:886.6px;font-size:11.7px;color:#8a8a8a;letter-spacing:-0.2px;">0 F</div>
<div class="a" style="left:767px;top:87px;width:503px;height:823px;background:#2a2a2a;"></div>
<div class="a" style="left:769px;top:87px;width:498px;height:21px;background:#2a2a2a;border-top:1px solid #6a6a6a"></div>
<div class="a" style="left:769px;top:104px;width:498px;height:4px;background:#262626;"></div>
<div class="grip" style="left:776px;top:92px;width:11px;height:12px"></div>
<div class="t" style="left:796px;top:93.6px;font-size:11.7px;color:#cfcfcf;letter-spacing:-0.2px;">View</div>
<div class="t" style="left:835px;top:93.6px;font-size:11.7px;color:#cfcfcf;letter-spacing:-0.2px;">Cameras</div>
<div class="t" style="left:892px;top:93.6px;font-size:11.7px;color:#cfcfcf;letter-spacing:-0.2px;">Display</div>
<div class="t" style="left:943px;top:93.6px;font-size:11.7px;color:#cfcfcf;letter-spacing:-0.2px;">Options</div>
<div class="t" style="left:999px;top:93.6px;font-size:11.7px;color:#cfcfcf;letter-spacing:-0.2px;">Filter</div>
<div class="t" style="left:1039px;top:93.6px;font-size:11.7px;color:#cfcfcf;letter-spacing:-0.2px;">Panel</div>
<div class="t" style="left:1081px;top:93.6px;font-size:11.7px;color:#cfcfcf;letter-spacing:-0.2px;">ProRender</div>
<svg class="a" style="left:1202px;top:89px;" width="60" height="16" viewBox="0 0 60 16"><g stroke="#1e1e1e" stroke-width="2" fill="none"><path d="M8 2v12M2 8h12"/><path d="M24 2v11M20 9l4 5 4-5"/><circle cx="40" cy="8" r="5"/><path d="M50 3h10M55 3v11"/></g></svg>
<div class="a" style="left:769px;top:108px;width:497px;height:800px;background:#5c5c5c;border:1px solid #a0a0a0;border-bottom:none"></div>
<div class="a" style="left:1015px;top:109px;width:2px;height:798px;background:#4e6a50;"></div>
<div class="a" style="left:772px;top:111px;width:70px;height:17px;background:#585858;"></div>
<div class="t" style="left:775px;top:113.6px;font-size:11.7px;color:#dddddd;letter-spacing:-0.2px;">Perspective</div>
<div class="a" style="left:387px;top:189px;width:875px;height:717px;background:#2e2e2e;border:1px solid #3d6aa8;border-left-color:#1c2c50;border-top-color:#5a7090"></div>
<div class="a" style="left:388px;top:190px;width:873px;height:31px;background:#ffffff;"></div>
<svg class="a" style="left:396px;top:197px;" width="16" height="16" viewBox="0 0 16 16"><defs><radialGradient id="c4j" cx="40%" cy="40%" r="60%"><stop offset="0" stop-color="#aab4ee"/><stop offset="0.6" stop-color="#2c3ca0"/><stop offset="1" stop-color="#101848"/></radialGradient></defs><circle cx="8" cy="8" r="7.5" fill="url(#c4j)"/><ellipse cx="9" cy="7.5" rx="3.5" ry="2.8" fill="#0a0e30"/></svg>
<div class="t" style="left:417px;top:198.5px;font-size:13px;color:#1a1a1a;letter-spacing:-0.2px;">Timeline (2)</div>
<div class="a" style="left:1140px;top:205px;width:12px;height:1.5px;background:#222;"></div>
<div class="a" style="left:1186px;top:200px;width:11px;height:11px;background:transparent;border:1.3px solid #222"></div>
<svg class="a" style="left:1231px;top:199px;" width="12" height="12" viewBox="0 0 12 12"><path d="M1 1L11 11M11 1L1 11" stroke="#222" stroke-width="1.2"/></svg>
<div class="a" style="left:388px;top:221px;width:873px;height:21px;background:linear-gradient(#636363,#5c5c5c);"></div>
<div class="grip" style="left:393px;top:225px;width:12px;height:12px;background-image:radial-gradient(circle,#ccc 0.6px,transparent 0.9px);background-size:3px 3px"></div>
<div class="t" style="left:414px;top:225.6px;font-size:11.7px;color:#cdcdcd;letter-spacing:-0.2px;">Create</div>
<div class="t" style="left:461px;top:225.6px;font-size:11.7px;color:#cdcdcd;letter-spacing:-0.2px;">Edit</div>
<div class="t" style="left:495px;top:225.6px;font-size:11.7px;color:#cdcdcd;letter-spacing:-0.2px;">View</div>
<div class="t" style="left:534px;top:225.6px;font-size:11.7px;color:#cdcdcd;letter-spacing:-0.2px;">Frame</div>
<div class="t" style="left:579px;top:225.6px;font-size:11.7px;color:#cdcdcd;letter-spacing:-0.2px;">Functions</div>
<div class="t" style="left:644px;top:225.6px;font-size:11.7px;color:#cdcdcd;letter-spacing:-0.2px;">Key</div>
<div class="t" style="left:675px;top:225.6px;font-size:11.7px;color:#cdcdcd;letter-spacing:-0.2px;">F-Curve</div>
<div class="t" style="left:728px;top:225.6px;font-size:11.7px;color:#cdcdcd;letter-spacing:-0.2px;">Motion System</div>
<div class="t" style="left:818px;top:225.6px;font-size:11.7px;color:#cdcdcd;letter-spacing:-0.2px;">Bookmarks</div>
<svg class="a" style="left:1153px;top:223px;" width="106" height="18" viewBox="0 0 106 18"><g fill="none" stroke="#111" stroke-width="1.6"><circle cx="7" cy="7" r="4"/><path d="M10 10l4 5"/><path d="M20 9l6-6 6 6M22 8v7h8V8"/><ellipse cx="45" cy="9" rx="6" ry="2.5" stroke="#555" stroke-width="1"/><rect x="58" y="3" width="11" height="13" stroke-width="1.2"/><path d="M60 10h7M63.5 6v8"/><path d="M81 3v12M75 9h12" /><path d="M98 2v13M94 5l4-4 4 4M94 12l4 4 4-4"/></g></svg>
<div class="a" style="left:388px;top:242px;width:873px;height:1px;background:#262626;"></div>
<div class="a" style="left:388px;top:243px;width:873px;height:30px;background:#2d2d2d;"></div>
<div class="grip" style="left:389px;top:246px;width:7px;height:25px;background-image:repeating-linear-gradient(135deg,#777 0 1px,transparent 1px 3px);background-size:auto"></div>
<div class="a" style="left:397px;top:245px;width:54px;height:26px;background:#5a5a5a;border-radius:3px"></div>
<div class="a" style="left:424px;top:245px;width:1px;height:26px;background:#4a4a4a;"></div>
<div class="a" style="left:455px;top:245px;width:26px;height:26px;background:#5a5a5a;border-radius:3px"></div>
<div class="a" style="left:503px;top:245px;width:82px;height:26px;background:#5a5a5a;border-radius:3px"></div>
<div class="a" style="left:530px;top:245px;width:1px;height:26px;background:#4a4a4a;"></div>
<div class="a" style="left:558px;top:245px;width:1px;height:26px;background:#4a4a4a;"></div>
<div class="a" style="left:607px;top:245px;width:81px;height:26px;background:#5a5a5a;border-radius:3px"></div>
<div class="a" style="left:634px;top:245px;width:1px;height:26px;background:#4a4a4a;"></div>
<div class="a" style="left:661px;top:245px;width:1px;height:26px;background:#4a4a4a;"></div>
<div class="a" style="left:711px;top:245px;width:82px;height:26px;background:#5a5a5a;border-radius:3px"></div>
<div class="a" style="left:738px;top:245px;width:1px;height:26px;background:#4a4a4a;"></div>
<div class="a" style="left:766px;top:245px;width:1px;height:26px;background:#4a4a4a;"></div>
<div class="a" style="left:805px;top:245px;width:81px;height:26px;background:#5a5a5a;border-radius:3px"></div>
<div class="a" style="left:832px;top:245px;width:1px;height:26px;background:#4a4a4a;"></div>
<div class="a" style="left:859px;top:245px;width:1px;height:26px;background:#4a4a4a;"></div>
<div class="a" style="left:899px;top:245px;width:165px;height:26px;background:#5a5a5a;border-radius:3px"></div>
<div class="a" style="left:926px;top:245px;width:1px;height:26px;background:#4a4a4a;"></div>
<div class="a" style="left:954px;top:245px;width:1px;height:26px;background:#4a4a4a;"></div>
<div class="a" style="left:982px;top:245px;width:1px;height:26px;background:#4a4a4a;"></div>
<div class="a" style="left:1009px;top:245px;width:1px;height:26px;background:#4a4a4a;"></div>
<div class="a" style="left:1036px;top:245px;width:1px;height:26px;background:#4a4a4a;"></div>
<div class="a" style="left:1077px;top:245px;width:110px;height:26px;background:#5a5a5a;border-radius:3px"></div>
<div class="a" style="left:1104px;top:245px;width:1px;height:26px;background:#4a4a4a;"></div>
<div class="a" style="left:1132px;top:245px;width:1px;height:26px;background:#4a4a4a;"></div>
<div class="a" style="left:1159px;top:245px;width:1px;height:26px;background:#4a4a4a;"></div>
<div class="a" style="left:1199px;top:245px;width:54px;height:26px;background:#5a5a5a;border-radius:3px"></div>
<div class="a" style="left:1226px;top:245px;width:1px;height:26px;background:#4a4a4a;"></div>
<div class="a" style="left:766px;top:245px;width:27px;height:26px;background:#86a6d6;border-radius:0 3px 3px 0"></div>
<div class="a" style="left:899px;top:245px;width:26px;height:26px;background:#86a6d6;border-radius:3px 0 0 3px"></div>
<div class="a" style="left:981px;top:245px;width:28px;height:26px;background:#86a6d6;"></div>
<svg class="a" style="left:402px;top:248px;" width="20" height="20" viewBox="0 0 20 20"><rect x="1" y="3" width="18" height="16" fill="#eee" stroke="#111" stroke-width="1"/><rect x="1" y="1" width="18" height="3" fill="#111"/><path d="M5 15l9-8" stroke="#d07a20" stroke-width="3.5"/><circle cx="5" cy="15" r="2.5" fill="#d07a20"/><circle cx="14" cy="7" r="2.5" fill="#d07a20"/></svg>
<svg class="a" style="left:429px;top:248px;" width="20" height="20" viewBox="0 0 20 20"><rect x="1" y="3" width="18" height="16" fill="#eee" stroke="#111" stroke-width="1"/><rect x="1" y="1" width="18" height="3" fill="#111"/><path d="M4 16q3-2 4-8t5-4" fill="none" stroke="#d07a20" stroke-width="2.5"/><path d="M9 12l2-3 2 5 2-4 2 2" fill="none" stroke="#333" stroke-width="1"/></svg>
<svg class="a" style="left:460px;top:248px;" width="20" height="20" viewBox="0 0 20 20"><rect x="1" y="3" width="18" height="16" fill="#eee" stroke="#111" stroke-width="1"/><rect x="1" y="1" width="18" height="3" fill="#111"/><path d="M4 6h3v10H4zM13 6h3v10h-3zM7 9h6v3H7z" fill="#d07a20"/></svg>
<svg class="a" style="left:508px;top:247px;" width="22" height="22" viewBox="0 0 22 22"><path d="M1 7V1h6M15 1h6v6M21 15v6h-6M7 21H1v-6" fill="none" stroke="#151515" stroke-width="2.2"/><path d="M3 12h4l3-7 3 13 2-6h4" fill="none" stroke="#111" stroke-width="1.4"/></svg>
<svg class="a" style="left:535px;top:247px;" width="22" height="22" viewBox="0 0 22 22"><path d="M1 7V1h6M15 1h6v6M21 15v6h-6M7 21H1v-6" fill="none" stroke="#151515" stroke-width="2.2"/><path d="M3 12h4l3-7 3 13 2-6h4" fill="none" stroke="#eee" stroke-width="1.4"/></svg>
<svg class="a" style="left:563px;top:247px;" width="22" height="22" viewBox="0 0 22 22"><path d="M1 7V1h6M15 1h6v6M21 15v6h-6M7 21H1v-6" fill="none" stroke="#151515" stroke-width="2.2"/><rect x="8" y="4" width="6" height="14" rx="2" fill="none" stroke="#c05020" stroke-width="1.6"/></svg>
<svg class="a" style="left:610px;top:247px;" width="22" height="22" viewBox="0 0 22 22"><path d="M7 4v9" stroke="#e86a20" stroke-width="3"/><circle cx="7" cy="4" r="2.6" fill="#e86a20"/><path d="M13 11v10M8 16h10" stroke="#eee" stroke-width="2.5"/></svg>
<svg class="a" style="left:637px;top:247px;" width="22" height="22" viewBox="0 0 22 22"><path d="M4 4v9" stroke="#e86a20" stroke-width="3"/><circle cx="4" cy="4" r="2.6" fill="#e86a20"/><path d="M18 4v9" stroke="#e86a20" stroke-width="3"/><circle cx="18" cy="4" r="2.6" fill="#e86a20"/><path d="M11 11v10M6 16h10" stroke="#eee" stroke-width="2.5"/><path d="M4 1h14" stroke="#222" stroke-dasharray="1 1"/></svg>
<svg class="a" style="left:664px;top:247px;" width="22" height="22" viewBox="0 0 22 22"><path d="M4 7v9" stroke="#e86a20" stroke-width="3"/><circle cx="4" cy="7" r="2.6" fill="#e86a20"/><path d="M9 5v9" stroke="#e86a20" stroke-width="3"/><circle cx="9" cy="5" r="2.6" fill="#e86a20"/><path d="M13 3v9" stroke="#e86a20" stroke-width="3"/><circle cx="13" cy="3" r="2.6" fill="#e86a20"/><path d="M11 17h9" stroke="#eee" stroke-width="2.5"/></svg>
<svg class="a" style="left:714px;top:247px;" width="22" height="22" viewBox="0 0 22 22"><path d="M2 16l9-6 9 6" fill="none" stroke="#eee" stroke-width="1.6"/><circle cx="11" cy="10" r="2" fill="#e86a20" stroke="#111" stroke-width=".6"/></svg>
<svg class="a" style="left:741px;top:247px;" width="22" height="22" viewBox="0 0 22 22"><path d="M2 16h7v-5h11" fill="none" stroke="#eee" stroke-width="1.6"/><circle cx="12" cy="11" r="2" fill="#e86a20"/></svg>
<svg class="a" style="left:769px;top:247px;" width="22" height="22" viewBox="0 0 22 22"><path d="M2 14q9-8 18 0" fill="none" stroke="#eee" stroke-width="1.6"/><path d="M1 10h20" stroke="#111" stroke-width="1.6"/><circle cx="11" cy="10" r="2" fill="#e86a20"/></svg>
<svg class="a" style="left:808px;top:247px;" width="22" height="22" viewBox="0 0 22 22"><path d="M3 19q5 0 7-8t8-8" fill="none" stroke="#eee" stroke-width="1.6"/><circle cx="3" cy="19" r="2" fill="#e86a20" stroke="#111" stroke-width=".5"/><circle cx="18" cy="4" r="2" fill="#e86a20" stroke="#111" stroke-width=".5"/></svg>
<svg class="a" style="left:835px;top:247px;" width="22" height="22" viewBox="0 0 22 22"><path d="M3 19q12 0 15-15" fill="none" stroke="#eee" stroke-width="1.6"/><circle cx="3" cy="19" r="2" fill="#e86a20" stroke="#111" stroke-width=".5"/><circle cx="18" cy="4" r="2" fill="#e86a20" stroke="#111" stroke-width=".5"/></svg>
<svg class="a" style="left:862px;top:247px;" width="22" height="22" viewBox="0 0 22 22"><path d="M3 19q0-15 15-15" fill="none" stroke="#eee" stroke-width="1.6"/><circle cx="3" cy="19" r="2" fill="#e86a20" stroke="#111" stroke-width=".5"/><circle cx="18" cy="4" r="2" fill="#e86a20" stroke="#111" stroke-width=".5"/></svg>
<svg class="a" style="left:902px;top:247px;" width="22" height="22" viewBox="0 0 22 22"><path d="M1 6h20" stroke="#111" stroke-width="1.6"/><path d="M1 6l4-3v6zM21 6l-4-3v6z" fill="#111"/><circle cx="11" cy="6" r="2" fill="#e86a20"/><text x="15" y="21" font-family="Liberation Sans" font-weight="bold" font-size="11" fill="#eee" text-anchor="middle">()</text></svg>
<svg class="a" style="left:930px;top:247px;" width="22" height="22" viewBox="0 0 22 22"><path d="M1 6h20" stroke="#111" stroke-width="1.6"/><path d="M1 6l4-3v6zM21 6l-4-3v6z" fill="#111"/><circle cx="11" cy="6" r="2" fill="#e86a20"/><text x="15" y="21" font-family="Liberation Sans" font-weight="bold" font-size="11" fill="#eee" text-anchor="middle">()</text></svg>
<svg class="a" style="left:957px;top:247px;" width="22" height="22" viewBox="0 0 22 22"><path d="M1 6h20" stroke="#111" stroke-width="1.6"/><path d="M1 6l4-3v6zM21 6l-4-3v6z" fill="#111"/><circle cx="11" cy="6" r="2" fill="#e86a20"/><path d="M3 21l2-7h8l2 7z" fill="#111"/><rect x="6" y="11" width="6" height="3" fill="#111"/><text x="15" y="21" font-family="Liberation Sans" font-weight="bold" font-size="11" fill="#eee" text-anchor="middle">()</text></svg>
<svg class="a" style="left:985px;top:247px;" width="22" height="22" viewBox="0 0 22 22"><path d="M1 6h20" stroke="#111" stroke-width="1.6"/><path d="M1 6l4-3v6zM21 6l-4-3v6z" fill="#111"/><circle cx="11" cy="6" r="2" fill="#e86a20"/><path d="M1 16q10-6 20 0" fill="none" stroke="#eee" stroke-width="1.4"/><path d="M16 12v7M13 16l3 4 3-4" stroke="#eee" stroke-width="2" fill="none"/></svg>
<svg class="a" style="left:1013px;top:247px;" width="22" height="22" viewBox="0 0 22 22"><path d="M1 6h20" stroke="#111" stroke-width="1.6"/><path d="M1 6l4-3v6zM21 6l-4-3v6z" fill="#111"/><circle cx="11" cy="6" r="2" fill="#e86a20"/><path d="M10 21l2-7h6l2 7z" fill="#111"/></svg>
<svg class="a" style="left:1040px;top:247px;" width="22" height="22" viewBox="0 0 22 22"><path d="M1 6h20" stroke="#111" stroke-width="1.6"/><path d="M1 6l4-3v6zM21 6l-4-3v6z" fill="#111"/><circle cx="11" cy="6" r="2" fill="#e86a20"/><path d="M1 14h20" stroke="#111" stroke-width="1.6"/><circle cx="11" cy="14" r="2" fill="#e86a20"/><path d="M16 12v7M13 16l3 4 3-4" stroke="#eee" stroke-width="2" fill="none"/></svg>
<svg class="a" style="left:1080px;top:247px;" width="22" height="22" viewBox="0 0 22 22"><path d="M12 2L4 12l8 9" fill="none" stroke="#111" stroke-width="1.4"/><circle cx="4" cy="12" r="2" fill="#e86a20"/><rect x="14" y="12" width="7" height="6" fill="#111"/><path d="M15.5 12v-2a2 2 0 0 1 4 0v2" fill="none" stroke="#111" stroke-width="1.4"/></svg>
<svg class="a" style="left:1107px;top:247px;" width="22" height="22" viewBox="0 0 22 22"><path d="M1 6h20" stroke="#111" stroke-width="1.6"/><path d="M1 6l4-3v6zM21 6l-4-3v6z" fill="#111"/><circle cx="11" cy="6" r="2" fill="#e86a20"/><rect x="13" y="15" width="7" height="6" fill="#111"/><path d="M14.5 15v-2a2 2 0 0 1 4 0v2" fill="none" stroke="#111" stroke-width="1.4"/></svg>
<svg class="a" style="left:1135px;top:247px;" width="22" height="22" viewBox="0 0 22 22"><path d="M2 6h16" stroke="#e86a20" stroke-width="3"/><path d="M1 6l4-3v6zM19 6l-4-3v6z" fill="#e86a20"/><rect x="13" y="15" width="7" height="6" fill="#111"/><path d="M14.5 15v-2a2 2 0 0 1 4 0v2" fill="none" stroke="#111" stroke-width="1.4"/></svg>
<svg class="a" style="left:1162px;top:247px;" width="22" height="22" viewBox="0 0 22 22"><path d="M6 2v18" stroke="#e86a20" stroke-width="3"/><rect x="13" y="15" width="7" height="6" fill="#111"/><path d="M14.5 15v-2a2 2 0 0 1 4 0v2" fill="none" stroke="#111" stroke-width="1.4"/></svg>
<svg class="a" style="left:1202px;top:247px;" width="22" height="22" viewBox="0 0 22 22"><path d="M12 2L4 12l8 9" fill="none" stroke="#111" stroke-width="1.4"/><circle cx="4" cy="12" r="2" fill="#e86a20"/><text x="12" y="16" font-family="Liberation Sans" font-weight="bold" font-size="10" fill="#eee">0°</text></svg>
<svg class="a" style="left:1229px;top:247px;" width="22" height="22" viewBox="0 0 22 22"><path d="M1 6h20" stroke="#111" stroke-width="1.6"/><path d="M1 6l4-3v6zM21 6l-4-3v6z" fill="#111"/><circle cx="11" cy="6" r="2" fill="#e86a20"/><text x="16" y="21" font-family="Liberation Sans" font-weight="bold" font-size="13" fill="#fff" text-anchor="middle">0</text></svg>
<div class="a" style="left:388px;top:272px;width:873px;height:2px;background:#6e6e6e;"></div>
<div class="a" style="left:388px;top:274px;width:176px;height:615px;background:#5a5a5a;"></div>
<div class="t" style="left:398px;top:295.6px;font-size:11.7px;color:#e0e0e0;letter-spacing:-0.2px;">F-Curve Mode</div>
<div class="a" style="left:388px;top:326px;width:176px;height:2px;background:#6a6a6a;"></div>
<div class="a" style="left:388px;top:328px;width:123px;height:36px;background:#2f2f2f;"></div>
<div class="a" style="left:512px;top:328px;width:52px;height:36px;background:#363636;"></div>
<div class="a" style="left:511px;top:328px;width:1px;height:561px;background:#3e3e3e;"></div>
<div class="a" style="left:564px;top:274px;width:1px;height:615px;background:#3a3a3a;"></div>
<svg class="a" style="left:401px;top:330px;" width="11" height="11" viewBox="0 0 11 11"><rect x=".5" y=".5" width="10" height="10" fill="none" stroke="#aaa"/><path d="M3 5.5h5" stroke="#ccc"/></svg>
<svg class="a" style="left:416px;top:330px;" width="13" height="13" viewBox="0 0 13 13"><circle cx="6.5" cy="6.5" r="5.3" fill="none" stroke="#7aa4e0" stroke-width="1.6"/></svg>
<div class="t" style="left:432px;top:331.6px;font-size:11.7px;color:#3ad0c8;letter-spacing:-0.2px;">Circle</div>
<div class="t" style="left:436px;top:349.6px;font-size:11.7px;color:#3ad0c8;letter-spacing:-0.2px;">Rotation . H</div>
<svg class="a" style="left:515px;top:330px;" width="46" height="14" viewBox="0 0 46 14"><rect x="0" y="0" width="12" height="12" fill="#8a8a8a"/><path d="M1 11L11 1" stroke="#333" stroke-width="1.2"/><rect x="17" y="0" width="5" height="3" fill="#f0b030"/><rect x="17" y="4.5" width="5" height="3" fill="#f0b030"/><rect x="17" y="9" width="5" height="3" fill="#f0b030"/><circle cx="35" cy="6" r="5" fill="#8a8a8a"/></svg>
<svg class="a" style="left:515px;top:348px;" width="46" height="14" viewBox="0 0 46 14"><rect x="0" y="0" width="12" height="12" fill="#8a8a8a"/><path d="M1 11L11 1" stroke="#333" stroke-width="1.2"/><rect x="17" y="0" width="5" height="3" fill="#f0b030"/><rect x="17" y="4.5" width="5" height="3" fill="#f0b030"/><rect x="17" y="9" width="5" height="3" fill="#f0b030"/><circle cx="35" cy="6" r="5" fill="#8a8a8a"/></svg>
<div class="a" style="left:565px;top:274px;width:36px;height:615px;background:#5a5a5a;"></div>
<svg class="a" style="left:601px;top:274px;" width="657" height="615" viewBox="0 0 657 615"><rect x="0" y="0" width="657" height="615" fill="#2b2b2b"/><path d="M0 614.5H657" stroke="#3b3b3b" stroke-width="1"/><path d="M0 586.5H657" stroke="#3b3b3b" stroke-width="1"/><path d="M0 558.5H657" stroke="#3b3b3b" stroke-width="1"/><path d="M0 530.5H657" stroke="#3b3b3b" stroke-width="1"/><path d="M0 502.5H657" stroke="#3b3b3b" stroke-width="1"/><path d="M0 474.5H657" stroke="#3b3b3b" stroke-width="1"/><path d="M0 446.5H657" stroke="#3b3b3b" stroke-width="1"/><path d="M0 418.5H657" stroke="#3b3b3b" stroke-width="1"/><path d="M0 390.5H657" stroke="#3b3b3b" stroke-width="1"/><path d="M0 362.5H657" stroke="#3b3b3b" stroke-width="1"/><path d="M0 334.5H657" stroke="#3b3b3b" stroke-width="1"/><path d="M0 305.5H657" stroke="#3b3b3b" stroke-width="1"/><path d="M0 277.5H657" stroke="#3b3b3b" stroke-width="1"/><path d="M0 249.5H657" stroke="#3b3b3b" stroke-width="1"/><path d="M0 221.5H657" stroke="#3b3b3b" stroke-width="1"/><path d="M0 193.5H657" stroke="#3b3b3b" stroke-width="1"/><path d="M0 165.5H657" stroke="#3b3b3b" stroke-width="1"/><path d="M0 137.5H657" stroke="#3b3b3b" stroke-width="1"/><path d="M0 109.5H657" stroke="#3b3b3b" stroke-width="1"/><path d="M0 81.5H657" stroke="#3b3b3b" stroke-width="1"/><path d="M0 53.5H657" stroke="#3b3b3b" stroke-width="1"/><path d="M0 18.5H657M0 35.5H657" stroke="#353535" stroke-width="1"/><path d="M0.5 18V615" stroke="#1f1f1f" stroke-width="1"/><path d="M15.5 18V615" stroke="#393939" stroke-width="1"/><path d="M30.5 18V615" stroke="#393939" stroke-width="1"/><path d="M45.5 18V615" stroke="#393939" stroke-width="1"/><path d="M60.5 18V615" stroke="#393939" stroke-width="1"/><path d="M76.5 18V615" stroke="#1f1f1f" stroke-width="1"/><path d="M91.5 18V615" stroke="#393939" stroke-width="1"/><path d="M106.5 18V615" stroke="#393939" stroke-width="1"/><path d="M121.5 18V615" stroke="#393939" stroke-width="1"/><path d="M136.5 18V615" stroke="#393939" stroke-width="1"/><path d="M151.5 18V615" stroke="#1f1f1f" stroke-width="1"/><path d="M166.5 18V615" stroke="#393939" stroke-width="1"/><path d="M181.5 18V615" stroke="#393939" stroke-width="1"/><path d="M197.5 18V615" stroke="#393939" stroke-width="1"/><path d="M212.5 18V615" stroke="#393939" stroke-width="1"/><path d="M227.5 18V615" stroke="#1f1f1f" stroke-width="1"/><path d="M242.5 18V615" stroke="#393939" stroke-width="1"/><path d="M257.5 18V615" stroke="#393939" stroke-width="1"/><path d="M272.5 18V615" stroke="#393939" stroke-width="1"/><path d="M287.5 18V615" stroke="#393939" stroke-width="1"/><path d="M302.5 18V615" stroke="#1f1f1f" stroke-width="1"/><path d="M318.5 18V615" stroke="#393939" stroke-width="1"/><path d="M333.5 18V615" stroke="#393939" stroke-width="1"/><path d="M348.5 18V615" stroke="#393939" stroke-width="1"/><path d="M363.5 18V615" stroke="#393939" stroke-width="1"/><path d="M378.5 18V615" stroke="#1f1f1f" stroke-width="1"/><path d="M393.5 18V615" stroke="#393939" stroke-width="1"/><path d="M408.5 18V615" stroke="#393939" stroke-width="1"/><path d="M423.5 18V615" stroke="#393939" stroke-width="1"/><path d="M438.5 18V615" stroke="#393939" stroke-width="1"/><path d="M454.5 18V615" stroke="#1f1f1f" stroke-width="1"/><path d="M469.5 18V615" stroke="#393939" stroke-width="1"/><path d="M484.5 18V615" stroke="#393939" stroke-width="1"/><path d="M499.5 18V615" stroke="#393939" stroke-width="1"/><path d="M514.5 18V615" stroke="#393939" stroke-width="1"/><path d="M529.5 18V615" stroke="#1f1f1f" stroke-width="1"/><path d="M544.5 18V615" stroke="#393939" stroke-width="1"/><path d="M559.5 18V615" stroke="#393939" stroke-width="1"/><path d="M575.5 18V615" stroke="#393939" stroke-width="1"/><path d="M590.5 18V615" stroke="#393939" stroke-width="1"/><path d="M605.5 18V615" stroke="#1f1f1f" stroke-width="1"/><path d="M620.5 18V615" stroke="#393939" stroke-width="1"/><path d="M635.5 18V615" stroke="#393939" stroke-width="1"/><path d="M650.5 18V615" stroke="#393939" stroke-width="1"/><path d="M0 53.5H657" stroke="#6e6e6e" stroke-width="1.5"/><path d="M0 586.5H657" stroke="#0c0c0c" stroke-width="1.3"/><path d="M453.59999999999997 81.5H657" stroke="#0c0c0c" stroke-width="1.3"/><text x="75.6" y="13.5" font-family="Liberation Sans" font-size="11" fill="#d4d4d4" text-anchor="middle">5</text><text x="151.2" y="13.5" font-family="Liberation Sans" font-size="11" fill="#d4d4d4" text-anchor="middle">10</text><text x="226.79999999999998" y="13.5" font-family="Liberation Sans" font-size="11" fill="#d4d4d4" text-anchor="middle">15</text><text x="302.4" y="13.5" font-family="Liberation Sans" font-size="11" fill="#d4d4d4" text-anchor="middle">20</text><text x="378.0" y="13.5" font-family="Liberation Sans" font-size="11" font-weight="bold" fill="#f0f0f0" text-anchor="middle">25</text><text x="453.59999999999997" y="13.5" font-family="Liberation Sans" font-size="11" fill="#d4d4d4" text-anchor="middle">30</text><text x="529.1999999999999" y="13.5" font-family="Liberation Sans" font-size="11" fill="#d4d4d4" text-anchor="middle">35</text><text x="604.8" y="13.5" font-family="Liberation Sans" font-size="11" fill="#d4d4d4" text-anchor="middle">40</text><rect x="15.62" y="3" width="16" height="14" fill="#3ec47a"/><text x="33.12" y="13.5" font-family="Liberation Sans" font-size="11" fill="#d4d4d4">1</text><path d="M14.12 0V615" stroke="#10382a" stroke-width="3"/><path d="M16.119999999999997 0V615" stroke="#a8f0c8" stroke-width="1.3"/><path d="M0.0 586.0C201.6 586.0 403.2 81.0 604.8 81.0" fill="none" stroke="#64dccb" stroke-width="1.25"/><path d="M146.7 588.0L151.2 581.0L155.7 588.0z" fill="#0c0c0c"/><path d="M449.09999999999997 83.0L453.59999999999997 76.0L458.09999999999997 83.0z" fill="#0c0c0c"/><rect x="-3.0" y="583.0" width="6" height="6" fill="#22d0e0"/><rect x="601.8" y="78.0" width="6" height="6" fill="#22d0e0"/></svg>
<svg class="a" style="left:565px;top:274px;" width="36" height="615" viewBox="0 0 36 615"><path d="M1 614.5H36" stroke="#454545" stroke-width="1"/><path d="M1 586.5H36" stroke="#454545" stroke-width="1"/><path d="M1 558.5H36" stroke="#454545" stroke-width="1"/><path d="M1 530.5H36" stroke="#454545" stroke-width="1"/><path d="M1 502.5H36" stroke="#454545" stroke-width="1"/><path d="M1 474.5H36" stroke="#454545" stroke-width="1"/><path d="M1 446.5H36" stroke="#454545" stroke-width="1"/><path d="M1 418.5H36" stroke="#454545" stroke-width="1"/><path d="M1 390.5H36" stroke="#454545" stroke-width="1"/><path d="M1 362.5H36" stroke="#454545" stroke-width="1"/><path d="M1 334.5H36" stroke="#454545" stroke-width="1"/><path d="M1 305.5H36" stroke="#454545" stroke-width="1"/><path d="M1 277.5H36" stroke="#454545" stroke-width="1"/><path d="M1 249.5H36" stroke="#454545" stroke-width="1"/><path d="M1 221.5H36" stroke="#454545" stroke-width="1"/><path d="M1 193.5H36" stroke="#454545" stroke-width="1"/><path d="M1 165.5H36" stroke="#454545" stroke-width="1"/><path d="M1 137.5H36" stroke="#454545" stroke-width="1"/><path d="M1 109.5H36" stroke="#454545" stroke-width="1"/><path d="M1 81.5H36" stroke="#454545" stroke-width="1"/><path d="M1 53.5H36" stroke="#454545" stroke-width="1"/><path d="M1 18.5H36M1 35.5H36" stroke="#454545" stroke-width="1"/><path d="M6.5 18V615M21.5 18V615" stroke="#464646" stroke-width="1"/><text x="29" y="590.0" font-family="Liberation Sans" font-size="11" fill="#e4e4e4" text-anchor="end">0</text><text x="29" y="533.8888888888889" font-family="Liberation Sans" font-size="11" fill="#e4e4e4" text-anchor="end">40</text><text x="29" y="477.77777777777777" font-family="Liberation Sans" font-size="11" fill="#e4e4e4" text-anchor="end">80</text><text x="29" y="421.66666666666663" font-family="Liberation Sans" font-size="11" fill="#e4e4e4" text-anchor="end">120</text><text x="29" y="365.55555555555554" font-family="Liberation Sans" font-size="11" fill="#e4e4e4" text-anchor="end">160</text><text x="29" y="309.44444444444446" font-family="Liberation Sans" font-size="11" fill="#e4e4e4" text-anchor="end">200</text><text x="29" y="253.33333333333331" font-family="Liberation Sans" font-size="11" fill="#e4e4e4" text-anchor="end">240</text><text x="29" y="197.22222222222223" font-family="Liberation Sans" font-size="11" fill="#e4e4e4" text-anchor="end">280</text><text x="29" y="141.1111111111111" font-family="Liberation Sans" font-size="11" fill="#e4e4e4" text-anchor="end">320</text><text x="29" y="85.0" font-family="Liberation Sans" font-size="11" fill="#e4e4e4" text-anchor="end">360</text></svg>
<div class="t" style="left:598px;top:279.7px;font-size:11px;color:#d4d4d4;letter-spacing:-0.2px;">0</div>
<div class="a" style="left:388px;top:888px;width:873px;height:2px;background:#6a6a6a;"></div>
<div class="a" style="left:388px;top:890px;width:873px;height:15px;background:#2d2d2d;"></div>
<div class="t" style="left:395px;top:892.6px;font-size:11.7px;color:#cfcfcf;letter-spacing:-0.2px;">Current Frame&nbsp; 1&nbsp; Preview&nbsp; 0--&gt;300</div>
<div class="a" style="left:1259px;top:190px;width:2px;height:716px;background:#2e62a8;"></div>
<div class="a" style="left:387px;top:904px;width:874px;height:2px;background:#2e62a8;"></div>
<div class="a" style="left:1261px;top:330px;width:4px;height:517px;background:linear-gradient(90deg,#9a9a9a,#6a6a6a);"></div>
<div class="a" style="left:1261px;top:880px;width:4px;height:24px;background:#7aa0d8;"></div>
<div class="a" style="left:1270px;top:48px;width:628px;height:485px;background:#2b2b2b;border:1px solid #5a5a5a"></div>
<div class="a" style="left:1271px;top:49px;width:627px;height:22px;background:#2a2a2a;"></div>
<div class="grip" style="left:1277px;top:54px;width:12px;height:12px"></div>
<div class="t" style="left:1297px;top:54.6px;font-size:11.7px;color:#cdcdcd;letter-spacing:-0.2px;">File</div>
<div class="t" style="left:1329px;top:54.6px;font-size:11.7px;color:#cdcdcd;letter-spacing:-0.2px;">Edit</div>
<div class="t" style="left:1363px;top:54.6px;font-size:11.7px;color:#cdcdcd;letter-spacing:-0.2px;">View</div>
<div class="t" style="left:1402px;top:54.6px;font-size:11.7px;color:#cdcdcd;letter-spacing:-0.2px;">Objects</div>
<div class="t" style="left:1455px;top:54.6px;font-size:11.7px;color:#cdcdcd;letter-spacing:-0.2px;">Tags</div>
<div class="t" style="left:1492px;top:54.6px;font-size:11.7px;color:#cdcdcd;letter-spacing:-0.2px;">Bookmarks</div>
<svg class="a" style="left:1830px;top:52px;" width="62" height="17" viewBox="0 0 62 17"><g stroke="#1a1a1a" stroke-width="1.5" fill="none"><path d="M3 3l6 10"/><path d="M18 9l5-6 5 6v6h-10z"/><path d="M50 2h10M55 2v13"/></g></svg>
<div class="a" style="left:1271px;top:71px;width:627px;height:1.5px;background:#5a5a5a;"></div>
<div class="a" style="left:1402px;top:73px;width:493px;height:20px;background:#2d2d2d;"></div>
<div class="a" style="left:1402px;top:93px;width:493px;height:20px;background:#272727;"></div>
<div class="a" style="left:1402px;top:113px;width:493px;height:20px;background:#2d2d2d;"></div>
<div class="a" style="left:1402px;top:133px;width:493px;height:20px;background:#272727;"></div>
<div class="a" style="left:1402px;top:153px;width:493px;height:20px;background:#2d2d2d;"></div>
<div class="a" style="left:1402px;top:173px;width:493px;height:20px;background:#272727;"></div>
<div class="a" style="left:1272px;top:73px;width:89px;height:20px;background:linear-gradient(#4d4d4d,#464646);"></div>
<div class="a" style="left:1362px;top:73px;width:39px;height:20px;background:#404040;"></div>
<div class="a" style="left:1272px;top:93px;width:89px;height:20px;background:linear-gradient(#4d4d4d,#464646);"></div>
<div class="a" style="left:1362px;top:93px;width:39px;height:20px;background:#404040;"></div>
<div class="a" style="left:1272px;top:113px;width:89px;height:20px;background:linear-gradient(#4d4d4d,#464646);"></div>
<div class="a" style="left:1362px;top:113px;width:39px;height:20px;background:#404040;"></div>
<div class="a" style="left:1272px;top:133px;width:89px;height:20px;background:linear-gradient(#4d4d4d,#464646);"></div>
<div class="a" style="left:1362px;top:133px;width:39px;height:20px;background:#404040;"></div>
<div class="a" style="left:1272px;top:153px;width:89px;height:20px;background:linear-gradient(#4d4d4d,#464646);"></div>
<div class="a" style="left:1362px;top:153px;width:39px;height:20px;background:#404040;"></div>
<div class="a" style="left:1272px;top:173px;width:89px;height:20px;background:linear-gradient(#4d4d4d,#464646);"></div>
<div class="a" style="left:1362px;top:173px;width:39px;height:20px;background:#404040;"></div>
<div class="a" style="left:1401px;top:72px;width:1px;height:459px;background:#4a4a4a;"></div>
<div class="a" style="left:1361px;top:72px;width:1px;height:121px;background:#3a3a3a;"></div>
<div class="a" style="left:1279px;top:73px;width:1px;height:110px;background:#9a9a9a;"></div>
<div class="a" style="left:1279px;top:83px;width:8px;height:1px;background:#9a9a9a;"></div>
<div class="a" style="left:1291px;top:113px;width:1px;height:51px;background:#9a9a9a;"></div>
<div class="a" style="left:1291px;top:123px;width:8px;height:1px;background:#9a9a9a;"></div>
<div class="a" style="left:1291px;top:143px;width:8px;height:1px;background:#9a9a9a;"></div>
<div class="a" style="left:1291px;top:163px;width:8px;height:1px;background:#9a9a9a;"></div>
<svg class="a" style="left:1274px;top:98px;" width="11" height="11" viewBox="0 0 11 11"><rect x=".5" y=".5" width="10" height="10" fill="#4a4a4a" stroke="#aaa"/><path d="M3 5.5h5" stroke="#ddd"/></svg>
<svg class="a" style="left:1274px;top:178px;" width="11" height="11" viewBox="0 0 11 11"><rect x=".5" y=".5" width="10" height="10" fill="#4a4a4a" stroke="#aaa"/><path d="M3 5.5h5M5.5 3v5" stroke="#ddd"/></svg>
<svg class="a" style="left:1288px;top:76px;" width="16" height="14" viewBox="0 0 16 14"><circle cx="4" cy="4" r="3" fill="#dde"/><circle cx="10" cy="4" r="3" fill="#dde"/><rect x="2" y="7" width="10" height="6" fill="#111"/><path d="M12 9l4-2v6l-4-2z" fill="#111"/></svg>
<div class="t" style="left:1307px;top:77.6px;font-size:11.7px;color:#c8c8c8;letter-spacing:-0.2px;">Camera</div>
<svg class="a" style="left:1290px;top:96px;" width="14" height="14" viewBox="0 0 14 14"><path d="M1.5 2v10h10" fill="none" stroke="#eee" stroke-width="1.6"/><text x="6" y="8" font-family="Liberation Sans" font-weight="bold" font-size="8" fill="#bcd">0</text></svg>
<div class="t" style="left:1307px;top:97.6px;font-size:11.7px;color:#c8a030;letter-spacing:-0.2px;">Lightrig</div>
<svg class="a" style="left:1300px;top:116px;" width="14" height="14" viewBox="0 0 14 14"><path d="M1.5 2v10h10" fill="none" stroke="#eee" stroke-width="1.6"/><text x="6" y="8" font-family="Liberation Sans" font-weight="bold" font-size="8" fill="#bcd">0</text></svg>
<div class="t" style="left:1318px;top:117.6px;font-size:11.7px;color:#c8c8c8;letter-spacing:-0.2px;">Target</div>
<div class="a" style="left:1301px;top:138px;width:11px;height:9px;background:#eaeaea;border-radius:1px"></div>
<div class="t" style="left:1318px;top:137.6px;font-size:11.7px;color:#c8c8c8;letter-spacing:-0.2px;">Light</div>
<svg class="a" style="left:1300px;top:157px;" width="13" height="13" viewBox="0 0 13 13"><circle cx="6.5" cy="6.5" r="5.3" fill="none" stroke="#7aa4e0" stroke-width="1.4"/></svg>
<div class="t" style="left:1318px;top:157.6px;font-size:11.7px;color:#38d0a8;letter-spacing:-0.2px;">Circle</div>
<svg class="a" style="left:1290px;top:176px;" width="14" height="14" viewBox="0 0 14 14"><path d="M1.5 2v10h10" fill="none" stroke="#eee" stroke-width="1.6"/><text x="6" y="8" font-family="Liberation Sans" font-weight="bold" font-size="8" fill="#bcd">0</text></svg>
<div class="t" style="left:1307px;top:177.6px;font-size:11.7px;color:#c8c8c8;letter-spacing:-0.2px;">Geometry</div>
<svg class="a" style="left:1366px;top:76px;" width="34" height="14" viewBox="0 0 34 14"><rect x="0" y="1" width="11" height="11" fill="#7a7a7a"/><path d="M1 11L10 2" stroke="#4a4a4a" stroke-width="1.2"/><circle cx="17.5" cy="3" r="1.6" fill="#666"/><circle cx="17.5" cy="10" r="1.6" fill="#666"/></svg>
<svg class="a" style="left:1366px;top:96px;" width="34" height="14" viewBox="0 0 34 14"><rect x="0" y="1" width="11" height="11" fill="#7a7a7a"/><path d="M1 11L10 2" stroke="#4a4a4a" stroke-width="1.2"/><circle cx="17.5" cy="3" r="1.6" fill="#666"/><circle cx="17.5" cy="10" r="1.6" fill="#666"/></svg>
<svg class="a" style="left:1366px;top:116px;" width="34" height="14" viewBox="0 0 34 14"><rect x="0" y="1" width="11" height="11" fill="#7a7a7a"/><path d="M1 11L10 2" stroke="#4a4a4a" stroke-width="1.2"/><circle cx="17.5" cy="3" r="1.6" fill="#666"/><circle cx="17.5" cy="10" r="1.6" fill="#666"/></svg>
<svg class="a" style="left:1366px;top:136px;" width="34" height="14" viewBox="0 0 34 14"><rect x="0" y="1" width="11" height="11" fill="#7a7a7a"/><path d="M1 11L10 2" stroke="#4a4a4a" stroke-width="1.2"/><circle cx="17.5" cy="3" r="1.6" fill="#666"/><circle cx="17.5" cy="10" r="1.6" fill="#666"/></svg>
<svg class="a" style="left:1366px;top:156px;" width="34" height="14" viewBox="0 0 34 14"><rect x="0" y="1" width="11" height="11" fill="#7a7a7a"/><path d="M1 11L10 2" stroke="#4a4a4a" stroke-width="1.2"/><circle cx="17.5" cy="3" r="1.6" fill="#666"/><circle cx="17.5" cy="10" r="1.6" fill="#666"/></svg>
<svg class="a" style="left:1366px;top:176px;" width="34" height="14" viewBox="0 0 34 14"><rect x="0" y="1" width="11" height="11" fill="#7a7a7a"/><path d="M1 11L10 2" stroke="#4a4a4a" stroke-width="1.2"/><circle cx="17.5" cy="3" r="1.6" fill="#666"/><circle cx="17.5" cy="10" r="1.6" fill="#666"/></svg>
<svg class="a" style="left:1388px;top:76px;" width="12" height="12" viewBox="0 0 12 12"><path d="M1 4V1h3M8 1h3v3M11 8v3H8M4 11H1V8" fill="none" stroke="#eee" stroke-width="1.3"/><circle cx="6" cy="6" r="1.5" fill="#eee"/></svg>
<svg class="a" style="left:1387px;top:137px;" width="12" height="12" viewBox="0 0 12 12"><path d="M1 6l3.5 4L11 1" fill="none" stroke="#3cbc78" stroke-width="1.6"/></svg>
<svg class="a" style="left:1387px;top:157px;" width="12" height="12" viewBox="0 0 12 12"><path d="M1 6l3.5 4L11 1" fill="none" stroke="#3cbc78" stroke-width="1.6"/></svg>
<svg class="a" style="left:1404px;top:76px;" width="13" height="11" viewBox="0 0 13 11"><rect x="0" y="2" width="13" height="9" rx="1.5" fill="#e85030"/><rect x="4" y="0" width="5" height="3" fill="#e85030"/><circle cx="6.5" cy="6.5" r="2" fill="#222"/></svg>
<div class="a" style="left:1405px;top:140px;width:11px;height:5px;background:#fff8e0;border-radius:2px;box-shadow:0 0 3px #e8b040"></div>
<svg class="a" style="left:1423px;top:135px;" width="15" height="15" viewBox="0 0 15 15"><circle cx="7.5" cy="7.5" r="6" fill="none" stroke="#a8b8f0" stroke-width="1.6"/><circle cx="7.5" cy="7.5" r="2.5" fill="#a8b8f0"/></svg>
<svg class="a" style="left:1442px;top:134px;" width="18" height="17" viewBox="0 0 18 17"><path d="M2 2l5 10" stroke="#fff" stroke-width="1.6"/><path d="M4 9l5 6 4-4z" fill="#8090e0"/><path d="M11 3l3 3M9 14l6 1" stroke="#fff" stroke-width="1.6"/></svg>
<div class="a" style="left:1899px;top:48px;width:21px;height:986px;background:#2a2a2a;"></div>
<div class="a" style="left:1900px;top:49px;width:18px;height:51px;background:#5e5e5e;border-radius:2px"></div>
<div class="t" style="left:1903px;top:56px;font-size:12px;color:#40c8b8;transform:rotate(90deg);transform-origin:0 0;left:1916px">Objects</div>
<div class="t" style="left:1914px;top:106px;font-size:11px;color:#7a7a7a;transform:rotate(90deg);transform-origin:0 0">Takes</div>
<div class="t" style="left:1914px;top:146px;font-size:11px;color:#7a7a7a;transform:rotate(90deg);transform-origin:0 0">Content Browser</div>
<div class="t" style="left:1914px;top:246px;font-size:11px;color:#7a7a7a;transform:rotate(90deg);transform-origin:0 0">Structure</div>
<div class="a" style="left:1901px;top:137px;width:16px;height:1px;background:#3a3a3a;"></div>
<div class="a" style="left:1901px;top:233px;width:16px;height:1px;background:#3a3a3a;"></div>
<div class="a" style="left:1900px;top:538px;width:18px;height:57px;background:#6a6a6a;border-radius:2px"></div>
<div class="t" style="left:1916px;top:545px;font-size:12px;color:#40c8b8;transform:rotate(90deg);transform-origin:0 0">Attributes</div>
<div class="t" style="left:1914px;top:604px;font-size:11px;color:#7a7a7a;transform:rotate(90deg);transform-origin:0 0">Layers</div>
<div class="a" style="left:1918px;top:49px;width:1px;height:985px;background:#3a3a3a;"></div>
<div class="a" style="left:1270px;top:537px;width:628px;height:494px;background:#2b2b2b;border:1px solid #5a5a5a"></div>
<div class="a" style="left:1271px;top:539px;width:627px;height:21px;background:#2a2a2a;"></div>
<div class="grip" style="left:1277px;top:543px;width:12px;height:12px"></div>
<div class="t" style="left:1297px;top:543.6px;font-size:11.7px;color:#cdcdcd;letter-spacing:-0.2px;">Mode</div>
<div class="t" style="left:1341px;top:543.6px;font-size:11.7px;color:#cdcdcd;letter-spacing:-0.2px;">Edit</div>
<div class="t" style="left:1375px;top:543.6px;font-size:11.7px;color:#cdcdcd;letter-spacing:-0.2px;">User Data</div>
<svg class="a" style="left:1752px;top:541px;" width="145" height="16" viewBox="0 0 145 16"><g fill="#1a1a1a"><path d="M2 8l10-5v10z"/><path d="M18 12l12-6" stroke="#222" stroke-width="1.2"/><path d="M47 2l6 11h-12z"/><path d="M70 2l6 10" stroke="#1e1e1e" stroke-width="1.2"/><path d="M95 8v6h8V8zM97 8V5a2 2 0 0 1 4 0v3" stroke="#1e1e1e" fill="none" stroke-width="1.2"/><circle cx="118" cy="8" r="5" fill="none" stroke="#1e1e1e" stroke-width="1.2"/><path d="M130 2h10M135 2v12" stroke="#1e1e1e" stroke-width="1.4"/></g></svg>
<div class="a" style="left:1271px;top:560px;width:627px;height:1.5px;background:#5a5a5a;"></div>
<svg class="a" style="left:1276px;top:564px;" width="18" height="18" viewBox="0 0 18 18"><path d="M3 15l7-7" stroke="#eee" stroke-width="3.5"/><path d="M9 5l4-3 3 3-3 4z" fill="#eee"/><circle cx="4" cy="14" r="3" fill="#ddd"/></svg>
<div class="t" style="left:1299px;top:567.6px;font-size:11.7px;color:#cfcfcf;letter-spacing:-0.2px;">Value Key (2 Elements)</div>
<div class="a" style="left:1271px;top:590px;width:627px;height:18px;background:#323232;"></div>
<div class="t" style="left:1275px;top:594.6px;font-size:11.7px;color:#cfcfcf;font-weight:bold;letter-spacing:-0.3px">Key Properties</div>
<div class="t" style="left:1293px;top:614.6px;font-size:11.7px;color:#cfcfcf;letter-spacing:-0.1px">Interpolation . . . . . </div>
<div class="a" style="left:1404px;top:612px;width:268px;height:16px;background:linear-gradient(#727272,#5a5a5a);border-radius:3px"></div>
<div class="t" style="left:1411px;top:614.6px;font-size:11.7px;color:#e4e4e4;letter-spacing:-0.2px;">Spline</div>
<svg class="a" style="left:1658px;top:618px;" width="9" height="5" viewBox="0 0 9 5"><path d="M0 0h9L4.5 5z" fill="#eee"/></svg>
<div class="a" style="left:1273px;top:633px;width:401px;height:1px;background:#4a4a4a;"></div>
<div class="t" style="left:1293px;top:641.6px;font-size:11.7px;color:#cfcfcf;letter-spacing:-0.1px">Key Time . . . . . . . . . </div>
<div class="a" style="left:1404px;top:638px;width:66px;height:16px;background:#333;border:1px solid #3e3e3e"></div>
<div class="a" style="left:1408px;top:641px;width:62px;height:11px;background:#7a7a7a;"></div>
<div class="t" style="left:1409px;top:640.7px;font-size:11px;color:#bdbdbd;letter-spacing:-0.2px;">&lt;&lt;Multip</div>
<svg class="a" style="left:1462px;top:641px;" width="6" height="10" viewBox="0 0 6 10"><path d="M0 4l3-4 3 4zM0 6l3 4 3-4z" fill="#bbb"/></svg>
<div class="t" style="left:1491px;top:641.6px;font-size:11.7px;color:#cfcfcf;letter-spacing:-0.1px">Breakdown . . . . . . . . </div>
<div class="a" style="left:1607px;top:640px;width:11px;height:11px;background:#555;border-radius:2px"></div>
<div class="t" style="left:1293px;top:661.6px;font-size:11.7px;color:#cfcfcf;letter-spacing:-0.1px">Key Value . . . . . . . . </div>
<div class="a" style="left:1404px;top:658px;width:66px;height:16px;background:#333;border:1px solid #3e3e3e"></div>
<div class="a" style="left:1408px;top:661px;width:62px;height:11px;background:#7a7a7a;"></div>
<div class="t" style="left:1409px;top:660.7px;font-size:11px;color:#bdbdbd;letter-spacing:-0.2px;">&lt;&lt;Multip</div>
<svg class="a" style="left:1462px;top:661px;" width="6" height="10" viewBox="0 0 6 10"><path d="M0 4l3-4 3 4zM0 6l3 4 3-4z" fill="#bbb"/></svg>
<div class="t" style="left:1491px;top:661.6px;font-size:11.7px;color:#cfcfcf;letter-spacing:-0.1px">Breakdown Color . . . </div>
<div class="a" style="left:1607px;top:660px;width:11px;height:11px;background:#555;border-radius:2px"></div>
<div class="t" style="left:1293px;top:680.6px;font-size:11.7px;color:#cfcfcf;letter-spacing:-0.1px">Lock Time . . . . . . . . </div>
<div class="a" style="left:1404px;top:680px;width:11px;height:11px;background:#555;border-radius:2px"></div>
<div class="t" style="left:1491px;top:680.6px;font-size:11.7px;color:#cfcfcf;letter-spacing:-0.1px">Mute . . . . . . . . . . . . . </div>
<div class="a" style="left:1607px;top:680px;width:11px;height:11px;background:#555;border-radius:2px"></div>
<div class="t" style="left:1293px;top:698.6px;font-size:11.7px;color:#cfcfcf;letter-spacing:-0.1px">Lock Value . . . . . . . </div>
<div class="a" style="left:1404px;top:698px;width:11px;height:11px;background:#555;border-radius:2px"></div>
<div class="a" style="left:1273px;top:716px;width:401px;height:1px;background:#4a4a4a;"></div>
<div class="t" style="left:1293px;top:724.6px;font-size:11.7px;color:#cfcfcf;letter-spacing:-0.1px">Key Preset . . . . . . . . </div>
<div class="a" style="left:1404px;top:721px;width:268px;height:16px;background:linear-gradient(#727272,#5a5a5a);border-radius:3px"></div>
<div class="t" style="left:1411px;top:723.6px;font-size:11.7px;color:#e4e4e4;letter-spacing:-0.2px;">AutoKey No Overshoot</div>
<svg class="a" style="left:1658px;top:727px;" width="9" height="5" viewBox="0 0 9 5"><path d="M0 0h9L4.5 5z" fill="#eee"/></svg>
<div class="a" style="left:1273px;top:742px;width:401px;height:1px;background:#4a4a4a;"></div>
<div class="t" style="left:1293px;top:750.6px;font-size:11.7px;color:#7e7e7e;letter-spacing:-0.1px">Left&nbsp; Time . . . . . . . . </div>
<div class="a" style="left:1404px;top:747px;width:66px;height:16px;background:#2e2e2e;border:1px solid #3e3e3e"></div>
<div class="t" style="left:1409px;top:749.7px;font-size:11px;color:#555;letter-spacing:-0.2px;">&lt;&lt;Multip</div>
<svg class="a" style="left:1462px;top:750px;" width="6" height="10" viewBox="0 0 6 10"><path d="M0 4l3-4 3 4zM0 6l3 4 3-4z" fill="#555"/></svg>
<div class="t" style="left:1491px;top:750.6px;font-size:11.7px;color:#7e7e7e;letter-spacing:-0.1px">Right Time . . . . . . . . </div>
<div class="a" style="left:1607px;top:747px;width:67px;height:16px;background:#2e2e2e;border:1px solid #3e3e3e"></div>
<div class="t" style="left:1612px;top:749.7px;font-size:11px;color:#555;letter-spacing:-0.2px;">&lt;&lt;Multip</div>
<svg class="a" style="left:1666px;top:750px;" width="6" height="10" viewBox="0 0 6 10"><path d="M0 4l3-4 3 4zM0 6l3 4 3-4z" fill="#555"/></svg>
<div class="t" style="left:1293px;top:770.6px;font-size:11.7px;color:#7e7e7e;letter-spacing:-0.1px">Left&nbsp; Value . . . . . . . . </div>
<div class="a" style="left:1404px;top:767px;width:66px;height:16px;background:#2e2e2e;border:1px solid #3e3e3e"></div>
<div class="t" style="left:1409px;top:769.7px;font-size:11px;color:#555;letter-spacing:-0.2px;">&lt;&lt;Multip</div>
<svg class="a" style="left:1462px;top:770px;" width="6" height="10" viewBox="0 0 6 10"><path d="M0 4l3-4 3 4zM0 6l3 4 3-4z" fill="#555"/></svg>
<div class="t" style="left:1491px;top:770.6px;font-size:11.7px;color:#7e7e7e;letter-spacing:-0.1px">Right Value . . . . . . . . </div>
<div class="a" style="left:1607px;top:767px;width:67px;height:16px;background:#2e2e2e;border:1px solid #3e3e3e"></div>
<div class="t" style="left:1612px;top:769.7px;font-size:11px;color:#555;letter-spacing:-0.2px;">&lt;&lt;Multip</div>
<svg class="a" style="left:1666px;top:770px;" width="6" height="10" viewBox="0 0 6 10"><path d="M0 4l3-4 3 4zM0 6l3 4 3-4z" fill="#555"/></svg>
<div class="a" style="left:1273px;top:789px;width:401px;height:1px;background:#4a4a4a;"></div>
<div class="t" style="left:1293px;top:796.6px;font-size:11.7px;color:#8a8a8a;letter-spacing:-0.2px">Lock Tangent Angles</div>
<div class="a" style="left:1404px;top:796px;width:11px;height:11px;background:#555;border-radius:2px"></div>
<div class="t" style="left:1491px;top:796.6px;font-size:11.7px;color:#8a8a8a;letter-spacing:-0.2px">Lock Tangent Lengths</div>
<div class="a" style="left:1607px;top:796px;width:11px;height:11px;background:#555;border-radius:2px"></div>
<div class="t" style="left:1293px;top:814.6px;font-size:11.7px;color:#8a8a8a;letter-spacing:-0.1px">Break Tangents . . . . </div>
<div class="a" style="left:1404px;top:814px;width:11px;height:11px;background:#555;border-radius:2px"></div>
<div class="t" style="left:1491px;top:814.6px;font-size:11.7px;color:#8a8a8a;letter-spacing:-0.1px">Keep Visual Angle . . . </div>
<div class="a" style="left:1607px;top:814px;width:11px;height:11px;background:#555;border-radius:2px"></div>
<div class="a" style="left:1899px;top:49px;width:1px;height:983px;background:#3a3a3a;"></div>
<div class="a" style="left:39px;top:909px;width:928px;height:123px;background:#2a2a2a;border-top:1px solid #5a5a5a;border-left:1px solid #555"></div>
<div class="grip" style="left:46px;top:915px;width:11px;height:11px"></div>
<div class="t" style="left:66px;top:914.6px;font-size:11.7px;color:#cdcdcd;letter-spacing:-0.2px;">Create</div>
<div class="t" style="left:113px;top:914.6px;font-size:11.7px;color:#cdcdcd;letter-spacing:-0.2px;">Edit</div>
<div class="t" style="left:147px;top:914.6px;font-size:11.7px;color:#cdcdcd;letter-spacing:-0.2px;">Function</div>
<div class="t" style="left:206px;top:914.6px;font-size:11.7px;color:#cdcdcd;letter-spacing:-0.2px;">Texture</div>
<div class="a" style="left:40px;top:931px;width:926px;height:1.5px;background:#5a5a5a;"></div>
<svg class="a" style="left:42px;top:934px;" width="43" height="42" viewBox="0 0 43 42"><defs><pattern id="chk" width="14" height="14" patternUnits="userSpaceOnUse"><rect width="7" height="7" fill="#ddd"/><rect x="7" y="7" width="7" height="7" fill="#ddd"/><rect x="7" width="7" height="7" fill="#888"/><rect y="7" width="7" height="7" fill="#888"/></pattern><radialGradient id="ball" cx="35%" cy="30%" r="70%"><stop offset="0" stop-color="#fff"/><stop offset=".15" stop-color="#ccc"/><stop offset=".5" stop-color="#666"/><stop offset="1" stop-color="#222"/></radialGradient></defs><rect width="43" height="42" fill="url(#chk)"/><circle cx="21.5" cy="22" r="19" fill="url(#ball)" opacity=".9"/><circle cx="15" cy="12" r="3" fill="#fff"/></svg>
<div class="a" style="left:42px;top:976px;width:43px;height:15px;background:#20d4d4;"></div>
<div class="t" style="left:44px;top:978.6px;font-size:11.7px;color:#0a2a2a;letter-spacing:-0.2px;">Octane</div>
<div class="a" style="left:966px;top:909px;width:4px;height:123px;background:#2a2a2a;"></div>
<div class="a" style="left:970px;top:909px;width:297px;height:123px;background:#2a2a2a;border:1px solid #555;border-bottom:none"></div>
<div class="grip" style="left:976px;top:915px;width:11px;height:11px"></div>
<div class="t" style="left:995px;top:914.6px;font-size:11.7px;color:#cdcdcd;letter-spacing:-0.2px;">Position</div>
<div class="t" style="left:1086px;top:914.6px;font-size:11.7px;color:#cdcdcd;letter-spacing:-0.2px;">Size</div>
<div class="t" style="left:1178px;top:914.6px;font-size:11.7px;color:#cdcdcd;letter-spacing:-0.2px;">Rotation</div>
<div class="a" style="left:971px;top:930px;width:295px;height:1.5px;background:#5a5a5a;"></div>
<div class="t" style="left:974px;top:939.6px;font-size:11.7px;color:#bdbdbd;letter-spacing:-0.2px;">X</div>
<div class="a" style="left:984px;top:936px;width:83px;height:17px;background:#2e2e2e;border:1px solid #3c3c3c"></div>
<div class="t" style="left:989px;top:939.6px;font-size:11.5px;color:#c8c8c8;letter-spacing:-0.2px;">-16.667 cm</div>
<svg class="a" style="left:1059px;top:940px;" width="6" height="10" viewBox="0 0 6 10"><path d="M0 4l3-4 3 4zM0 6l3 4 3-4z" fill="#aaa"/></svg>
<div class="t" style="left:1071px;top:939.6px;font-size:11.7px;color:#bdbdbd;letter-spacing:-0.2px;">X</div>
<div class="a" style="left:1081px;top:936px;width:83px;height:17px;background:#2e2e2e;border:1px solid #3c3c3c"></div>
<div class="t" style="left:1086px;top:939.6px;font-size:11.5px;color:#c8c8c8;letter-spacing:-0.2px;">100 cm</div>
<svg class="a" style="left:1156px;top:940px;" width="6" height="10" viewBox="0 0 6 10"><path d="M0 4l3-4 3 4zM0 6l3 4 3-4z" fill="#aaa"/></svg>
<div class="t" style="left:1168px;top:939.6px;font-size:11.7px;color:#bdbdbd;letter-spacing:-0.2px;">H</div>
<div class="a" style="left:1180px;top:936px;width:83px;height:17px;background:#2e2e2e;border:1px solid #3c3c3c"></div>
<div class="t" style="left:1185px;top:939.6px;font-size:11.5px;color:#c8c8c8;letter-spacing:-0.2px;">0.664 °</div>
<svg class="a" style="left:1255px;top:940px;" width="6" height="10" viewBox="0 0 6 10"><path d="M0 4l3-4 3 4zM0 6l3 4 3-4z" fill="#aaa"/></svg>
<div class="t" style="left:974px;top:959.6px;font-size:11.7px;color:#bdbdbd;letter-spacing:-0.2px;">Y</div>
<div class="a" style="left:984px;top:956px;width:83px;height:17px;background:#2e2e2e;border:1px solid #3c3c3c"></div>
<div class="t" style="left:989px;top:959.6px;font-size:11.5px;color:#c8c8c8;letter-spacing:-0.2px;">0 cm</div>
<svg class="a" style="left:1059px;top:960px;" width="6" height="10" viewBox="0 0 6 10"><path d="M0 4l3-4 3 4zM0 6l3 4 3-4z" fill="#aaa"/></svg>
<div class="t" style="left:1071px;top:959.6px;font-size:11.7px;color:#bdbdbd;letter-spacing:-0.2px;">Y</div>
<div class="a" style="left:1081px;top:956px;width:83px;height:17px;background:#2e2e2e;border:1px solid #3c3c3c"></div>
<div class="t" style="left:1086px;top:959.6px;font-size:11.5px;color:#c8c8c8;letter-spacing:-0.2px;">0 cm</div>
<svg class="a" style="left:1156px;top:960px;" width="6" height="10" viewBox="0 0 6 10"><path d="M0 4l3-4 3 4zM0 6l3 4 3-4z" fill="#aaa"/></svg>
<div class="t" style="left:1168px;top:959.6px;font-size:11.7px;color:#bdbdbd;letter-spacing:-0.2px;">P</div>
<div class="a" style="left:1180px;top:956px;width:83px;height:17px;background:#2e2e2e;border:1px solid #3c3c3c"></div>
<div class="t" style="left:1185px;top:959.6px;font-size:11.5px;color:#c8c8c8;letter-spacing:-0.2px;">0 °</div>
<svg class="a" style="left:1255px;top:960px;" width="6" height="10" viewBox="0 0 6 10"><path d="M0 4l3-4 3 4zM0 6l3 4 3-4z" fill="#aaa"/></svg>
<div class="t" style="left:974px;top:979.6px;font-size:11.7px;color:#bdbdbd;letter-spacing:-0.2px;">Z</div>
<div class="a" style="left:984px;top:976px;width:83px;height:17px;background:#2e2e2e;border:1px solid #3c3c3c"></div>
<div class="t" style="left:989px;top:979.6px;font-size:11.5px;color:#c8c8c8;letter-spacing:-0.2px;">0 cm</div>
<svg class="a" style="left:1059px;top:980px;" width="6" height="10" viewBox="0 0 6 10"><path d="M0 4l3-4 3 4zM0 6l3 4 3-4z" fill="#aaa"/></svg>
<div class="t" style="left:1071px;top:979.6px;font-size:11.7px;color:#bdbdbd;letter-spacing:-0.2px;">Z</div>
<div class="a" style="left:1081px;top:976px;width:83px;height:17px;background:#2e2e2e;border:1px solid #3c3c3c"></div>
<div class="t" style="left:1086px;top:979.6px;font-size:11.5px;color:#c8c8c8;letter-spacing:-0.2px;">100 cm</div>
<svg class="a" style="left:1156px;top:980px;" width="6" height="10" viewBox="0 0 6 10"><path d="M0 4l3-4 3 4zM0 6l3 4 3-4z" fill="#aaa"/></svg>
<div class="t" style="left:1168px;top:979.6px;font-size:11.7px;color:#bdbdbd;letter-spacing:-0.2px;">B</div>
<div class="a" style="left:1180px;top:976px;width:83px;height:17px;background:#2e2e2e;border:1px solid #3c3c3c"></div>
<div class="t" style="left:1185px;top:979.6px;font-size:11.5px;color:#c8c8c8;letter-spacing:-0.2px;">0 °</div>
<svg class="a" style="left:1255px;top:980px;" width="6" height="10" viewBox="0 0 6 10"><path d="M0 4l3-4 3 4zM0 6l3 4 3-4z" fill="#aaa"/></svg>
<div class="a" style="left:984px;top:999px;width:83px;height:16px;background:linear-gradient(#727272,#5a5a5a);border-radius:3px"></div>
<div class="t" style="left:992px;top:1001.6px;font-size:11.7px;color:#e4e4e4;letter-spacing:-0.2px;">Object (Rel)</div>
<svg class="a" style="left:1053px;top:1005px;" width="9" height="5" viewBox="0 0 9 5"><path d="M0 0h9L4.5 5z" fill="#eee"/></svg>
<div class="a" style="left:1081px;top:999px;width:83px;height:16px;background:linear-gradient(#727272,#5a5a5a);border-radius:3px"></div>
<div class="t" style="left:1089px;top:1001.6px;font-size:11.7px;color:#e4e4e4;letter-spacing:-0.2px;">Size</div>
<svg class="a" style="left:1150px;top:1005px;" width="9" height="5" viewBox="0 0 9 5"><path d="M0 0h9L4.5 5z" fill="#eee"/></svg>
<div class="a" style="left:1180px;top:999px;width:83px;height:16px;background:linear-gradient(#6a6a6a,#585858);border-radius:8px"></div>
<div class="t" style="left:1205px;top:1002.6px;font-size:11.7px;color:#e4e4e4;letter-spacing:-0.2px;">Apply</div>
<div class="a" style="left:1267px;top:909px;width:3px;height:123px;background:#2a2a2a;"></div>
<div class="a" style="left:1269px;top:909px;width:1px;height:123px;background:#444;"></div>
<div class="a" style="left:0px;top:1030px;width:1270px;height:1px;background:#6a6a6a;"></div>
<div class="a" style="left:0px;top:1031px;width:1920px;height:3px;background:#252525;"></div>
<div class="a" style="left:0px;top:1034px;width:1920px;height:46px;background:#ffffff;"></div>
<div class="t" style="left:201px;top:1051px;font-size:17.5px;color:#2a2a2a;letter-spacing:0.51px">NIELS@VIDEO4.NL</div>
<div class="t" style="left:446px;top:1051px;font-size:17.5px;color:#2a2a2a;letter-spacing:1.34px">WWW.VIDEO4.NL</div>
<div class="t" style="left:693px;top:1051px;font-size:17.5px;color:#2a2a2a;letter-spacing:1.25px">3D MOTION DESIGN</div>
<div class="t" style="left:968px;top:1051px;font-size:17.5px;color:#2a2a2a;letter-spacing:0.47px">NETHERLANDS</div>
<div class="t" style="left:1170px;top:1051px;font-size:17.5px;color:#2a2a2a;letter-spacing:0.96px">PATREON.COM/VIDEO4TUTORIAL</div>
<div class="a" style="left:405px;top:1050px;width:1.2px;height:20px;background:#444;"></div>
<div class="a" style="left:652px;top:1050px;width:1.2px;height:20px;background:#444;"></div>
<div class="a" style="left:927px;top:1050px;width:1.2px;height:20px;background:#444;"></div>
<div class="a" style="left:1129px;top:1050px;width:1.2px;height:20px;background:#444;"></div>
<div class="a" style="left:1520px;top:1050px;width:1.2px;height:20px;background:#444;"></div>
<div class="t" style="left:1561px;top:1045px;font-size:24px;font-weight:bold;color:#111;letter-spacing:5px">TUTORIAL</div>
<svg class="a" style="left:59px;top:0px;" width="86" height="141" viewBox="0 0 86 141"><polygon points="0,0 85,0 85,120 42.8,140.5 0,120" fill="#f1f1f1" opacity=".95"/><path d="M53.2 17.8L61 22.3L55.9 58.6L61.6 58.6L61.6 67.6L54.6 67.6L51.9 86.4L39.6 87.7L42.4 67.6L10.4 67.6L10.4 66ZM46.3 39L28.6 58.6L43.6 58.6Z" fill="#111" fill-rule="evenodd"/><text x="9" y="105" font-family="Liberation Sans" font-weight="bold" font-size="16" fill="#141414" textLength="64" lengthAdjust="spacingAndGlyphs">VIDEO 4</text><text x="9" y="113.3" font-family="Liberation Sans" font-size="6.3" fill="#444" textLength="64" lengthAdjust="spacingAndGlyphs">MOTION BRANDING</text></svg>
<svg class="a" style="left:724px;top:262px;" width="13" height="20" viewBox="0 0 13 20"><path d="M1 1v15l4-4 3 6 2-1-3-6h5z" fill="#fff" stroke="#111" stroke-width="1"/></svg>
</body></html>
